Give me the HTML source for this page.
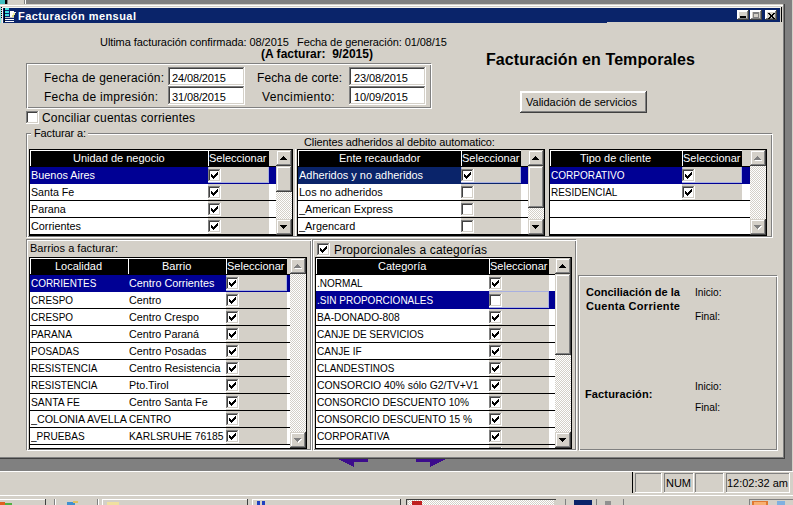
<!DOCTYPE html><html><head><meta charset="utf-8"><style>
html,body{margin:0;padding:0;width:793px;height:505px;overflow:hidden;background:#808080}
div{position:absolute}
.t{white-space:pre;line-height:normal;font-family:"Liberation Sans",sans-serif}
</style></head><body>
<div style="left:0px;top:0px;width:793px;height:505px;background:#808080;"></div>
<div style="left:0px;top:0px;width:5px;height:4px;background:#40c0c0;"></div>
<div style="left:5px;top:0px;width:2px;height:4px;background:#000;"></div>
<div style="left:8px;top:0px;width:16px;height:4px;background:#d4d0c8;"></div>
<div style="left:24px;top:0px;width:1px;height:4px;background:#808080;"></div>
<div style="left:25px;top:0px;width:1px;height:4px;background:#ffffff;"></div>
<div style="left:0px;top:4px;width:784px;height:455px;background:#d4d0c8;"></div>
<div style="left:792px;top:0px;width:1px;height:472px;background:#d4d0c8;"></div>
<div style="left:0px;top:5px;width:783px;height:1px;background:#ffffff;"></div>
<div style="left:0px;top:7px;width:781px;height:1px;background:#f4f2ee;"></div>
<div style="left:783px;top:4px;width:1px;height:455px;background:#808080;"></div>
<div style="left:784px;top:4px;width:1px;height:455px;background:#404040;"></div>
<div style="left:0px;top:457px;width:784px;height:1px;background:#808080;"></div>
<div style="left:0px;top:458px;width:785px;height:1px;background:#404040;"></div>
<div style="left:3px;top:8px;width:777px;height:14px;background:#0a246a;"></div>
<div style="left:3px;top:22px;width:604px;height:1px;background:#0a246a;"></div>
<div style="left:781px;top:7px;width:1px;height:15px;background:#000;"></div>
<div class="t" style="left:18px;top:10px;font-size:11px;color:#ffffff;font-weight:bold;letter-spacing:0.439px;">Facturación mensual</div>
<div style="left:0px;top:7px;width:1px;height:16px;background:#80e0e0;"></div>
<div style="left:1px;top:7px;width:1px;height:1px;background:#000;"></div>
<div style="left:1px;top:9px;width:1px;height:1px;background:#000;"></div>
<div style="left:1px;top:11px;width:1px;height:1px;background:#000;"></div>
<div style="left:1px;top:13px;width:1px;height:1px;background:#000;"></div>
<div style="left:1px;top:15px;width:1px;height:1px;background:#000;"></div>
<div style="left:1px;top:17px;width:1px;height:1px;background:#000;"></div>
<div style="left:2px;top:7px;width:1px;height:16px;background:#f0f0f0;"></div>
<div style="left:4px;top:8px;width:1px;height:14px;background:#000;"></div>
<div style="left:5px;top:8px;width:4px;height:2px;background:#40e0e0;"></div>
<div style="left:5px;top:11px;width:4px;height:2px;background:#40e0e0;"></div>
<div style="left:5px;top:14px;width:4px;height:2px;background:#40e0e0;"></div>
<div style="left:10px;top:11px;width:4px;height:6px;background:#ffffff;"></div>
<div style="left:13px;top:13px;width:2px;height:2px;background:#f0f0a0;"></div>
<div style="left:12px;top:15px;width:2px;height:2px;background:#e0e080;"></div>
<div style="left:14px;top:12px;width:2px;height:1px;background:#f0f0f0;"></div>
<div style="left:5px;top:17px;width:9px;height:1px;background:#c0c0c0;"></div>
<div style="left:5px;top:19px;width:9px;height:1px;background:#ffffff;"></div>
<div style="left:5px;top:21px;width:9px;height:1px;background:#ffffff;"></div>
<div style="left:737px;top:10px;width:12px;height:10px;background:#d4d0c8;"></div>
<div style="left:737px;top:10px;width:11px;height:1px;background:#ffffff;"></div>
<div style="left:737px;top:10px;width:1px;height:9px;background:#ffffff;"></div>
<div style="left:738px;top:11px;width:9px;height:1px;background:#ffffff;"></div>
<div style="left:738px;top:11px;width:1px;height:7px;background:#ffffff;"></div>
<div style="left:737px;top:19px;width:12px;height:1px;background:#404040;"></div>
<div style="left:748px;top:10px;width:1px;height:10px;background:#404040;"></div>
<div style="left:738px;top:18px;width:10px;height:1px;background:#808080;"></div>
<div style="left:747px;top:11px;width:1px;height:8px;background:#808080;"></div>
<div style="left:750px;top:10px;width:12px;height:10px;background:#d4d0c8;"></div>
<div style="left:750px;top:10px;width:11px;height:1px;background:#ffffff;"></div>
<div style="left:750px;top:10px;width:1px;height:9px;background:#ffffff;"></div>
<div style="left:751px;top:11px;width:9px;height:1px;background:#ffffff;"></div>
<div style="left:751px;top:11px;width:1px;height:7px;background:#ffffff;"></div>
<div style="left:750px;top:19px;width:12px;height:1px;background:#404040;"></div>
<div style="left:761px;top:10px;width:1px;height:10px;background:#404040;"></div>
<div style="left:751px;top:18px;width:10px;height:1px;background:#808080;"></div>
<div style="left:760px;top:11px;width:1px;height:8px;background:#808080;"></div>
<div style="left:765px;top:10px;width:12px;height:10px;background:#d4d0c8;"></div>
<div style="left:765px;top:10px;width:11px;height:1px;background:#ffffff;"></div>
<div style="left:765px;top:10px;width:1px;height:9px;background:#ffffff;"></div>
<div style="left:766px;top:11px;width:9px;height:1px;background:#ffffff;"></div>
<div style="left:766px;top:11px;width:1px;height:7px;background:#ffffff;"></div>
<div style="left:765px;top:19px;width:12px;height:1px;background:#404040;"></div>
<div style="left:776px;top:10px;width:1px;height:10px;background:#404040;"></div>
<div style="left:766px;top:18px;width:10px;height:1px;background:#808080;"></div>
<div style="left:775px;top:11px;width:1px;height:8px;background:#808080;"></div>
<div style="left:740px;top:16px;width:6px;height:2px;background:#000;"></div>
<div style="left:753px;top:12px;width:6px;height:6px;border:1px solid #808080;border-top-width:2px;box-sizing:border-box;"></div>
<svg style="position:absolute;left:768px;top:13px" width="7" height="6" shape-rendering="crispEdges" fill="#000"><rect x="0" y="0" width="2" height="1"/><rect x="5" y="0" width="2" height="1"/><rect x="1" y="1" width="2" height="1"/><rect x="4" y="1" width="2" height="1"/><rect x="2" y="2" width="3" height="1"/><rect x="2" y="3" width="3" height="1"/><rect x="1" y="4" width="2" height="1"/><rect x="4" y="4" width="2" height="1"/><rect x="0" y="5" width="2" height="1"/><rect x="5" y="5" width="2" height="1"/></svg>
<div class="t" style="left:100px;top:36px;font-size:11px;color:#000;letter-spacing:-0.068px;">Ultima facturación confirmada: 08/2015</div>
<div class="t" style="left:297px;top:36px;font-size:11px;color:#000;letter-spacing:-0.087px;">Fecha de generación: 01/08/15</div>
<div class="t" style="left:261px;top:47px;font-size:12px;color:#000;font-weight:bold;letter-spacing:0.020px;">(A facturar:  9/2015)</div>
<div class="t" style="left:486px;top:51px;font-size:16px;color:#000;font-weight:bold;letter-spacing:0.081px;">Facturación en Temporales</div>
<div style="left:26px;top:63px;width:405px;height:45px;border:1px solid #808080;box-sizing:border-box;"></div>
<div style="left:27px;top:64px;width:405px;height:45px;border:1px solid #ffffff;box-sizing:border-box;"></div>
<div style="left:26px;top:63px;width:405px;height:1px;background:#808080;"></div>
<div style="left:26px;top:63px;width:1px;height:45px;background:#808080;"></div>
<div class="t" style="left:44px;top:71px;font-size:12px;color:#000;letter-spacing:0.208px;">Fecha de generación:</div>
<div class="t" style="left:44px;top:90px;font-size:12px;color:#000;letter-spacing:0.294px;">Fecha de impresión:</div>
<div class="t" style="left:257px;top:71px;font-size:12px;color:#000;letter-spacing:0.118px;">Fecha de corte:</div>
<div class="t" style="left:262px;top:90px;font-size:12px;color:#000;letter-spacing:0.354px;">Vencimiento:</div>
<div style="left:168px;top:67px;width:77px;height:19px;background:#ffffff;"></div>
<div style="left:168px;top:67px;width:76px;height:1px;background:#808080;"></div>
<div style="left:168px;top:67px;width:1px;height:18px;background:#808080;"></div>
<div style="left:169px;top:68px;width:74px;height:1px;background:#404040;"></div>
<div style="left:169px;top:68px;width:1px;height:16px;background:#404040;"></div>
<div style="left:168px;top:85px;width:77px;height:1px;background:#ffffff;"></div>
<div style="left:244px;top:67px;width:1px;height:19px;background:#ffffff;"></div>
<div style="left:169px;top:84px;width:75px;height:1px;background:#d4d0c8;"></div>
<div style="left:243px;top:68px;width:1px;height:17px;background:#d4d0c8;"></div>
<div style="left:168px;top:86px;width:77px;height:19px;background:#ffffff;"></div>
<div style="left:168px;top:86px;width:76px;height:1px;background:#808080;"></div>
<div style="left:168px;top:86px;width:1px;height:18px;background:#808080;"></div>
<div style="left:169px;top:87px;width:74px;height:1px;background:#404040;"></div>
<div style="left:169px;top:87px;width:1px;height:16px;background:#404040;"></div>
<div style="left:168px;top:104px;width:77px;height:1px;background:#ffffff;"></div>
<div style="left:244px;top:86px;width:1px;height:19px;background:#ffffff;"></div>
<div style="left:169px;top:103px;width:75px;height:1px;background:#d4d0c8;"></div>
<div style="left:243px;top:87px;width:1px;height:17px;background:#d4d0c8;"></div>
<div style="left:349px;top:67px;width:77px;height:19px;background:#ffffff;"></div>
<div style="left:349px;top:67px;width:76px;height:1px;background:#808080;"></div>
<div style="left:349px;top:67px;width:1px;height:18px;background:#808080;"></div>
<div style="left:350px;top:68px;width:74px;height:1px;background:#404040;"></div>
<div style="left:350px;top:68px;width:1px;height:16px;background:#404040;"></div>
<div style="left:349px;top:85px;width:77px;height:1px;background:#ffffff;"></div>
<div style="left:425px;top:67px;width:1px;height:19px;background:#ffffff;"></div>
<div style="left:350px;top:84px;width:75px;height:1px;background:#d4d0c8;"></div>
<div style="left:424px;top:68px;width:1px;height:17px;background:#d4d0c8;"></div>
<div style="left:349px;top:86px;width:77px;height:19px;background:#ffffff;"></div>
<div style="left:349px;top:86px;width:76px;height:1px;background:#808080;"></div>
<div style="left:349px;top:86px;width:1px;height:18px;background:#808080;"></div>
<div style="left:350px;top:87px;width:74px;height:1px;background:#404040;"></div>
<div style="left:350px;top:87px;width:1px;height:16px;background:#404040;"></div>
<div style="left:349px;top:104px;width:77px;height:1px;background:#ffffff;"></div>
<div style="left:425px;top:86px;width:1px;height:19px;background:#ffffff;"></div>
<div style="left:350px;top:103px;width:75px;height:1px;background:#d4d0c8;"></div>
<div style="left:424px;top:87px;width:1px;height:17px;background:#d4d0c8;"></div>
<div class="t" style="left:172px;top:72px;font-size:11px;color:#000;letter-spacing:-0.125px;">24/08/2015</div>
<div class="t" style="left:172px;top:91px;font-size:11px;color:#000;letter-spacing:-0.125px;">31/08/2015</div>
<div class="t" style="left:354px;top:72px;font-size:11px;color:#000;letter-spacing:-0.125px;">23/08/2015</div>
<div class="t" style="left:354px;top:91px;font-size:11px;color:#000;letter-spacing:-0.125px;">10/09/2015</div>
<div style="left:520px;top:91px;width:127px;height:22px;background:#d4d0c8;"></div>
<div style="left:520px;top:91px;width:126px;height:1px;background:#ffffff;"></div>
<div style="left:520px;top:91px;width:1px;height:21px;background:#ffffff;"></div>
<div style="left:521px;top:92px;width:124px;height:1px;background:#ffffff;"></div>
<div style="left:521px;top:92px;width:1px;height:19px;background:#ffffff;"></div>
<div style="left:520px;top:112px;width:127px;height:1px;background:#404040;"></div>
<div style="left:646px;top:91px;width:1px;height:22px;background:#404040;"></div>
<div style="left:521px;top:111px;width:125px;height:1px;background:#808080;"></div>
<div style="left:645px;top:92px;width:1px;height:20px;background:#808080;"></div>
<div class="t" style="left:526px;top:96px;font-size:11px;color:#000;letter-spacing:-0.006px;">Validación de servicios</div>
<div style="left:26px;top:111px;width:13px;height:13px;background:#ffffff;"></div>
<div style="left:26px;top:111px;width:12px;height:1px;background:#808080;"></div>
<div style="left:26px;top:111px;width:1px;height:12px;background:#808080;"></div>
<div style="left:27px;top:112px;width:10px;height:1px;background:#404040;"></div>
<div style="left:27px;top:112px;width:1px;height:10px;background:#404040;"></div>
<div style="left:26px;top:123px;width:13px;height:1px;background:#ffffff;"></div>
<div style="left:38px;top:111px;width:1px;height:13px;background:#ffffff;"></div>
<div style="left:27px;top:122px;width:11px;height:1px;background:#d4d0c8;"></div>
<div style="left:37px;top:112px;width:1px;height:11px;background:#d4d0c8;"></div>
<div class="t" style="left:42px;top:111px;font-size:12px;color:#000;letter-spacing:0.183px;">Conciliar cuentas corrientes</div>
<div style="left:26px;top:133px;width:746px;height:104px;border:1px solid #808080;box-sizing:border-box;"></div>
<div style="left:27px;top:134px;width:746px;height:104px;border:1px solid #ffffff;box-sizing:border-box;"></div>
<div style="left:26px;top:133px;width:746px;height:1px;background:#808080;"></div>
<div style="left:26px;top:133px;width:1px;height:104px;background:#808080;"></div>
<div style="left:31px;top:128px;width:57px;height:10px;background:#d4d0c8;"></div>
<div class="t" style="left:34px;top:127px;font-size:11px;color:#000;letter-spacing:-0.122px;">Facturar a:</div>
<div class="t" style="left:304px;top:136px;font-size:11px;color:#000;letter-spacing:-0.123px;">Clientes adheridos al debito automatico:</div>
<div style="left:29px;top:149px;width:264px;height:87px;background:#000;"></div>
<div style="left:30px;top:166px;width:246px;height:69px;background:#ffffff;"></div>
<div style="left:30px;top:150px;width:246px;height:16px;background:#d4d0c8;"></div>
<div style="left:30px;top:150px;width:178px;height:16px;background:#000;"></div>
<div style="left:30px;top:150px;width:178px;height:1px;background:#ffffff;"></div>
<div style="left:30px;top:150px;width:1px;height:16px;background:#ffffff;"></div>
<div class="t" style="left:73px;top:152px;font-size:11px;color:#ffffff;">Unidad de negocio</div>
<div style="left:208px;top:150px;width:61px;height:16px;background:#000;"></div>
<div style="left:208px;top:150px;width:61px;height:1px;background:#ffffff;"></div>
<div style="left:208px;top:150px;width:1px;height:16px;background:#ffffff;"></div>
<div class="t" style="left:209px;top:152px;font-size:11px;color:#ffffff;">Seleccionar</div>
<div style="left:30px;top:166px;width:246px;height:1px;background:#000;"></div>
<div style="left:30px;top:167px;width:246px;height:17px;background:#000094;"></div>
<div style="left:269px;top:167px;width:7px;height:17px;background:#000094;"></div>
<div style="left:31px;top:169px;width:177px;height:15px;overflow:hidden"><div class="t" style="left:0;top:0;font-size:11px;color:#ffffff;transform:scaleX(0.9879);transform-origin:0 0;">Buenos Aires</div></div>
<div style="left:208px;top:167px;width:61px;height:17px;background:#d4d0c8;"></div>
<div style="left:208px;top:167px;width:61px;height:16px;border:1px solid #a8b0e0;border-top:none;box-sizing:border-box;"></div>
<div style="left:208px;top:183px;width:61px;height:1px;background:#000094;"></div>
<div style="left:208px;top:167px;width:20px;height:16px;overflow:hidden">
<div style="left:0px;top:2px;width:13px;height:13px;background:#ffffff;"></div>
<div style="left:0px;top:2px;width:12px;height:1px;background:#808080;"></div>
<div style="left:0px;top:2px;width:1px;height:12px;background:#808080;"></div>
<div style="left:1px;top:3px;width:10px;height:1px;background:#404040;"></div>
<div style="left:1px;top:3px;width:1px;height:10px;background:#404040;"></div>
<div style="left:0px;top:14px;width:13px;height:1px;background:#ffffff;"></div>
<div style="left:12px;top:2px;width:1px;height:13px;background:#ffffff;"></div>
<div style="left:1px;top:13px;width:11px;height:1px;background:#d4d0c8;"></div>
<div style="left:11px;top:3px;width:1px;height:11px;background:#d4d0c8;"></div>
<svg style="position:absolute;left:3px;top:5px" width="7" height="7" shape-rendering="crispEdges" fill="#000"><rect x="6" y="0" width="1" height="1"/><rect x="5" y="1" width="2" height="1"/><rect x="0" y="2" width="1" height="1"/><rect x="4" y="2" width="3" height="1"/><rect x="0" y="3" width="2" height="1"/><rect x="3" y="3" width="3" height="1"/><rect x="0" y="4" width="5" height="1"/><rect x="1" y="5" width="3" height="1"/><rect x="2" y="6" width="1" height="1"/></svg>
</div>
<div style="left:31px;top:186px;width:177px;height:15px;overflow:hidden"><div class="t" style="left:0;top:0;font-size:11px;color:#000;transform:scaleX(0.9701);transform-origin:0 0;">Santa Fe</div></div>
<div style="left:208px;top:184px;width:61px;height:16px;background:#d4d0c8;"></div>
<div style="left:208px;top:184px;width:20px;height:16px;overflow:hidden">
<div style="left:0px;top:2px;width:13px;height:13px;background:#ffffff;"></div>
<div style="left:0px;top:2px;width:12px;height:1px;background:#808080;"></div>
<div style="left:0px;top:2px;width:1px;height:12px;background:#808080;"></div>
<div style="left:1px;top:3px;width:10px;height:1px;background:#404040;"></div>
<div style="left:1px;top:3px;width:1px;height:10px;background:#404040;"></div>
<div style="left:0px;top:14px;width:13px;height:1px;background:#ffffff;"></div>
<div style="left:12px;top:2px;width:1px;height:13px;background:#ffffff;"></div>
<div style="left:1px;top:13px;width:11px;height:1px;background:#d4d0c8;"></div>
<div style="left:11px;top:3px;width:1px;height:11px;background:#d4d0c8;"></div>
<svg style="position:absolute;left:3px;top:5px" width="7" height="7" shape-rendering="crispEdges" fill="#000"><rect x="6" y="0" width="1" height="1"/><rect x="5" y="1" width="2" height="1"/><rect x="0" y="2" width="1" height="1"/><rect x="4" y="2" width="3" height="1"/><rect x="0" y="3" width="2" height="1"/><rect x="3" y="3" width="3" height="1"/><rect x="0" y="4" width="5" height="1"/><rect x="1" y="5" width="3" height="1"/><rect x="2" y="6" width="1" height="1"/></svg>
</div>
<div style="left:30px;top:200px;width:246px;height:1px;background:#000;"></div>
<div style="left:31px;top:203px;width:177px;height:15px;overflow:hidden"><div class="t" style="left:0;top:0;font-size:11px;color:#000;transform:scaleX(0.9803);transform-origin:0 0;">Parana</div></div>
<div style="left:208px;top:201px;width:61px;height:16px;background:#d4d0c8;"></div>
<div style="left:208px;top:201px;width:20px;height:16px;overflow:hidden">
<div style="left:0px;top:2px;width:13px;height:13px;background:#ffffff;"></div>
<div style="left:0px;top:2px;width:12px;height:1px;background:#808080;"></div>
<div style="left:0px;top:2px;width:1px;height:12px;background:#808080;"></div>
<div style="left:1px;top:3px;width:10px;height:1px;background:#404040;"></div>
<div style="left:1px;top:3px;width:1px;height:10px;background:#404040;"></div>
<div style="left:0px;top:14px;width:13px;height:1px;background:#ffffff;"></div>
<div style="left:12px;top:2px;width:1px;height:13px;background:#ffffff;"></div>
<div style="left:1px;top:13px;width:11px;height:1px;background:#d4d0c8;"></div>
<div style="left:11px;top:3px;width:1px;height:11px;background:#d4d0c8;"></div>
<svg style="position:absolute;left:3px;top:5px" width="7" height="7" shape-rendering="crispEdges" fill="#000"><rect x="6" y="0" width="1" height="1"/><rect x="5" y="1" width="2" height="1"/><rect x="0" y="2" width="1" height="1"/><rect x="4" y="2" width="3" height="1"/><rect x="0" y="3" width="2" height="1"/><rect x="3" y="3" width="3" height="1"/><rect x="0" y="4" width="5" height="1"/><rect x="1" y="5" width="3" height="1"/><rect x="2" y="6" width="1" height="1"/></svg>
</div>
<div style="left:30px;top:217px;width:246px;height:1px;background:#000;"></div>
<div style="left:31px;top:220px;width:177px;height:15px;overflow:hidden"><div class="t" style="left:0;top:0;font-size:11px;color:#000;transform:scaleX(0.9851);transform-origin:0 0;">Corrientes</div></div>
<div style="left:208px;top:218px;width:61px;height:16px;background:#d4d0c8;"></div>
<div style="left:208px;top:218px;width:20px;height:16px;overflow:hidden">
<div style="left:0px;top:2px;width:13px;height:13px;background:#ffffff;"></div>
<div style="left:0px;top:2px;width:12px;height:1px;background:#808080;"></div>
<div style="left:0px;top:2px;width:1px;height:12px;background:#808080;"></div>
<div style="left:1px;top:3px;width:10px;height:1px;background:#404040;"></div>
<div style="left:1px;top:3px;width:1px;height:10px;background:#404040;"></div>
<div style="left:0px;top:14px;width:13px;height:1px;background:#ffffff;"></div>
<div style="left:12px;top:2px;width:1px;height:13px;background:#ffffff;"></div>
<div style="left:1px;top:13px;width:11px;height:1px;background:#d4d0c8;"></div>
<div style="left:11px;top:3px;width:1px;height:11px;background:#d4d0c8;"></div>
<svg style="position:absolute;left:3px;top:5px" width="7" height="7" shape-rendering="crispEdges" fill="#000"><rect x="6" y="0" width="1" height="1"/><rect x="5" y="1" width="2" height="1"/><rect x="0" y="2" width="1" height="1"/><rect x="4" y="2" width="3" height="1"/><rect x="0" y="3" width="2" height="1"/><rect x="3" y="3" width="3" height="1"/><rect x="0" y="4" width="5" height="1"/><rect x="1" y="5" width="3" height="1"/><rect x="2" y="6" width="1" height="1"/></svg>
</div>
<div style="left:30px;top:234px;width:246px;height:1px;background:#000;"></div>
<div style="left:276px;top:150px;width:16px;height:16px;background:#d4d0c8;"></div>
<div style="left:276px;top:150px;width:15px;height:1px;background:#d4d0c8;"></div>
<div style="left:276px;top:150px;width:1px;height:15px;background:#d4d0c8;"></div>
<div style="left:277px;top:151px;width:13px;height:1px;background:#ffffff;"></div>
<div style="left:277px;top:151px;width:1px;height:13px;background:#ffffff;"></div>
<div style="left:276px;top:165px;width:16px;height:1px;background:#404040;"></div>
<div style="left:291px;top:150px;width:1px;height:16px;background:#404040;"></div>
<div style="left:277px;top:164px;width:14px;height:1px;background:#808080;"></div>
<div style="left:290px;top:151px;width:1px;height:14px;background:#808080;"></div>
<svg style="position:absolute;left:280px;top:156px" width="7" height="4" shape-rendering="crispEdges" fill="#000"><rect x="3" y="0" width="1" height="1"/><rect x="2" y="1" width="3" height="1"/><rect x="1" y="2" width="5" height="1"/><rect x="0" y="3" width="7" height="1"/></svg>
<div style="left:276px;top:219px;width:16px;height:16px;background:#d4d0c8;"></div>
<div style="left:276px;top:219px;width:15px;height:1px;background:#d4d0c8;"></div>
<div style="left:276px;top:219px;width:1px;height:15px;background:#d4d0c8;"></div>
<div style="left:277px;top:220px;width:13px;height:1px;background:#ffffff;"></div>
<div style="left:277px;top:220px;width:1px;height:13px;background:#ffffff;"></div>
<div style="left:276px;top:234px;width:16px;height:1px;background:#404040;"></div>
<div style="left:291px;top:219px;width:1px;height:16px;background:#404040;"></div>
<div style="left:277px;top:233px;width:14px;height:1px;background:#808080;"></div>
<div style="left:290px;top:220px;width:1px;height:14px;background:#808080;"></div>
<svg style="position:absolute;left:280px;top:225px" width="7" height="4" shape-rendering="crispEdges" fill="#000"><rect x="0" y="0" width="7" height="1"/><rect x="1" y="1" width="5" height="1"/><rect x="2" y="2" width="3" height="1"/><rect x="3" y="3" width="1" height="1"/></svg>
<div style="left:276px;top:166px;width:16px;height:53px;background-color:#d4d0c8;background-image:conic-gradient(#fff 25%,transparent 0 50%,#fff 0 75%,transparent 0);background-size:2px 2px;"></div>
<div style="left:276px;top:166px;width:16px;height:26px;background:#d4d0c8;"></div>
<div style="left:276px;top:166px;width:15px;height:1px;background:#d4d0c8;"></div>
<div style="left:276px;top:166px;width:1px;height:25px;background:#d4d0c8;"></div>
<div style="left:277px;top:167px;width:13px;height:1px;background:#ffffff;"></div>
<div style="left:277px;top:167px;width:1px;height:23px;background:#ffffff;"></div>
<div style="left:276px;top:191px;width:16px;height:1px;background:#404040;"></div>
<div style="left:291px;top:166px;width:1px;height:26px;background:#404040;"></div>
<div style="left:277px;top:190px;width:14px;height:1px;background:#808080;"></div>
<div style="left:290px;top:167px;width:1px;height:24px;background:#808080;"></div>
<div style="left:295px;top:149px;width:1px;height:87px;background:#ffffff;"></div>
<div style="left:297px;top:149px;width:248px;height:87px;background:#000;"></div>
<div style="left:298px;top:166px;width:230px;height:69px;background:#ffffff;"></div>
<div style="left:298px;top:150px;width:230px;height:16px;background:#d4d0c8;"></div>
<div style="left:298px;top:150px;width:163px;height:16px;background:#000;"></div>
<div style="left:298px;top:150px;width:163px;height:1px;background:#ffffff;"></div>
<div style="left:298px;top:150px;width:1px;height:16px;background:#ffffff;"></div>
<div class="t" style="left:339px;top:152px;font-size:11px;color:#ffffff;">Ente recaudador</div>
<div style="left:461px;top:150px;width:60px;height:16px;background:#000;"></div>
<div style="left:461px;top:150px;width:60px;height:1px;background:#ffffff;"></div>
<div style="left:461px;top:150px;width:1px;height:16px;background:#ffffff;"></div>
<div class="t" style="left:462px;top:152px;font-size:11px;color:#ffffff;">Seleccionar</div>
<div style="left:298px;top:166px;width:230px;height:1px;background:#000;"></div>
<div style="left:298px;top:167px;width:230px;height:17px;background:#0a246a;"></div>
<div style="left:521px;top:167px;width:7px;height:17px;background:#000094;"></div>
<div style="left:299px;top:169px;width:162px;height:15px;overflow:hidden"><div class="t" style="left:0;top:0;font-size:11px;color:#ffffff;transform:scaleX(0.9944);transform-origin:0 0;">Adheridos y no adheridos</div></div>
<div style="left:461px;top:167px;width:60px;height:17px;background:#d4d0c8;"></div>
<div style="left:461px;top:167px;width:60px;height:16px;border:1px solid #a8b0e0;border-top:none;box-sizing:border-box;"></div>
<div style="left:461px;top:183px;width:60px;height:1px;background:#0a246a;"></div>
<div style="left:461px;top:167px;width:20px;height:16px;overflow:hidden">
<div style="left:0px;top:2px;width:13px;height:13px;background:#ffffff;"></div>
<div style="left:0px;top:2px;width:12px;height:1px;background:#808080;"></div>
<div style="left:0px;top:2px;width:1px;height:12px;background:#808080;"></div>
<div style="left:1px;top:3px;width:10px;height:1px;background:#404040;"></div>
<div style="left:1px;top:3px;width:1px;height:10px;background:#404040;"></div>
<div style="left:0px;top:14px;width:13px;height:1px;background:#ffffff;"></div>
<div style="left:12px;top:2px;width:1px;height:13px;background:#ffffff;"></div>
<div style="left:1px;top:13px;width:11px;height:1px;background:#d4d0c8;"></div>
<div style="left:11px;top:3px;width:1px;height:11px;background:#d4d0c8;"></div>
<svg style="position:absolute;left:3px;top:5px" width="7" height="7" shape-rendering="crispEdges" fill="#000"><rect x="6" y="0" width="1" height="1"/><rect x="5" y="1" width="2" height="1"/><rect x="0" y="2" width="1" height="1"/><rect x="4" y="2" width="3" height="1"/><rect x="0" y="3" width="2" height="1"/><rect x="3" y="3" width="3" height="1"/><rect x="0" y="4" width="5" height="1"/><rect x="1" y="5" width="3" height="1"/><rect x="2" y="6" width="1" height="1"/></svg>
</div>
<div style="left:299px;top:186px;width:162px;height:15px;overflow:hidden"><div class="t" style="left:0;top:0;font-size:11px;color:#000;transform:scaleX(0.9931);transform-origin:0 0;">Los no adheridos</div></div>
<div style="left:461px;top:184px;width:60px;height:16px;background:#d4d0c8;"></div>
<div style="left:461px;top:184px;width:20px;height:16px;overflow:hidden">
<div style="left:0px;top:2px;width:13px;height:13px;background:#ffffff;"></div>
<div style="left:0px;top:2px;width:12px;height:1px;background:#808080;"></div>
<div style="left:0px;top:2px;width:1px;height:12px;background:#808080;"></div>
<div style="left:1px;top:3px;width:10px;height:1px;background:#404040;"></div>
<div style="left:1px;top:3px;width:1px;height:10px;background:#404040;"></div>
<div style="left:0px;top:14px;width:13px;height:1px;background:#ffffff;"></div>
<div style="left:12px;top:2px;width:1px;height:13px;background:#ffffff;"></div>
<div style="left:1px;top:13px;width:11px;height:1px;background:#d4d0c8;"></div>
<div style="left:11px;top:3px;width:1px;height:11px;background:#d4d0c8;"></div>
</div>
<div style="left:298px;top:200px;width:230px;height:1px;background:#000;"></div>
<div style="left:299px;top:203px;width:162px;height:15px;overflow:hidden"><div class="t" style="left:0;top:0;font-size:11px;color:#000;transform:scaleX(0.9854);transform-origin:0 0;">_American Express</div></div>
<div style="left:461px;top:201px;width:60px;height:16px;background:#d4d0c8;"></div>
<div style="left:461px;top:201px;width:20px;height:16px;overflow:hidden">
<div style="left:0px;top:2px;width:13px;height:13px;background:#ffffff;"></div>
<div style="left:0px;top:2px;width:12px;height:1px;background:#808080;"></div>
<div style="left:0px;top:2px;width:1px;height:12px;background:#808080;"></div>
<div style="left:1px;top:3px;width:10px;height:1px;background:#404040;"></div>
<div style="left:1px;top:3px;width:1px;height:10px;background:#404040;"></div>
<div style="left:0px;top:14px;width:13px;height:1px;background:#ffffff;"></div>
<div style="left:12px;top:2px;width:1px;height:13px;background:#ffffff;"></div>
<div style="left:1px;top:13px;width:11px;height:1px;background:#d4d0c8;"></div>
<div style="left:11px;top:3px;width:1px;height:11px;background:#d4d0c8;"></div>
</div>
<div style="left:298px;top:217px;width:230px;height:1px;background:#000;"></div>
<div style="left:299px;top:220px;width:162px;height:15px;overflow:hidden"><div class="t" style="left:0;top:0;font-size:11px;color:#000;transform:scaleX(0.9877);transform-origin:0 0;">_Argencard</div></div>
<div style="left:461px;top:218px;width:60px;height:16px;background:#d4d0c8;"></div>
<div style="left:461px;top:218px;width:20px;height:16px;overflow:hidden">
<div style="left:0px;top:2px;width:13px;height:13px;background:#ffffff;"></div>
<div style="left:0px;top:2px;width:12px;height:1px;background:#808080;"></div>
<div style="left:0px;top:2px;width:1px;height:12px;background:#808080;"></div>
<div style="left:1px;top:3px;width:10px;height:1px;background:#404040;"></div>
<div style="left:1px;top:3px;width:1px;height:10px;background:#404040;"></div>
<div style="left:0px;top:14px;width:13px;height:1px;background:#ffffff;"></div>
<div style="left:12px;top:2px;width:1px;height:13px;background:#ffffff;"></div>
<div style="left:1px;top:13px;width:11px;height:1px;background:#d4d0c8;"></div>
<div style="left:11px;top:3px;width:1px;height:11px;background:#d4d0c8;"></div>
</div>
<div style="left:298px;top:234px;width:230px;height:1px;background:#000;"></div>
<div style="left:528px;top:150px;width:16px;height:16px;background:#d4d0c8;"></div>
<div style="left:528px;top:150px;width:15px;height:1px;background:#d4d0c8;"></div>
<div style="left:528px;top:150px;width:1px;height:15px;background:#d4d0c8;"></div>
<div style="left:529px;top:151px;width:13px;height:1px;background:#ffffff;"></div>
<div style="left:529px;top:151px;width:1px;height:13px;background:#ffffff;"></div>
<div style="left:528px;top:165px;width:16px;height:1px;background:#404040;"></div>
<div style="left:543px;top:150px;width:1px;height:16px;background:#404040;"></div>
<div style="left:529px;top:164px;width:14px;height:1px;background:#808080;"></div>
<div style="left:542px;top:151px;width:1px;height:14px;background:#808080;"></div>
<svg style="position:absolute;left:532px;top:156px" width="7" height="4" shape-rendering="crispEdges" fill="#000"><rect x="3" y="0" width="1" height="1"/><rect x="2" y="1" width="3" height="1"/><rect x="1" y="2" width="5" height="1"/><rect x="0" y="3" width="7" height="1"/></svg>
<div style="left:528px;top:219px;width:16px;height:16px;background:#d4d0c8;"></div>
<div style="left:528px;top:219px;width:15px;height:1px;background:#d4d0c8;"></div>
<div style="left:528px;top:219px;width:1px;height:15px;background:#d4d0c8;"></div>
<div style="left:529px;top:220px;width:13px;height:1px;background:#ffffff;"></div>
<div style="left:529px;top:220px;width:1px;height:13px;background:#ffffff;"></div>
<div style="left:528px;top:234px;width:16px;height:1px;background:#404040;"></div>
<div style="left:543px;top:219px;width:1px;height:16px;background:#404040;"></div>
<div style="left:529px;top:233px;width:14px;height:1px;background:#808080;"></div>
<div style="left:542px;top:220px;width:1px;height:14px;background:#808080;"></div>
<svg style="position:absolute;left:532px;top:225px" width="7" height="4" shape-rendering="crispEdges" fill="#000"><rect x="0" y="0" width="7" height="1"/><rect x="1" y="1" width="5" height="1"/><rect x="2" y="2" width="3" height="1"/><rect x="3" y="3" width="1" height="1"/></svg>
<div style="left:528px;top:166px;width:16px;height:53px;background-color:#d4d0c8;background-image:conic-gradient(#fff 25%,transparent 0 50%,#fff 0 75%,transparent 0);background-size:2px 2px;"></div>
<div style="left:528px;top:166px;width:16px;height:42px;background:#d4d0c8;"></div>
<div style="left:528px;top:166px;width:15px;height:1px;background:#d4d0c8;"></div>
<div style="left:528px;top:166px;width:1px;height:41px;background:#d4d0c8;"></div>
<div style="left:529px;top:167px;width:13px;height:1px;background:#ffffff;"></div>
<div style="left:529px;top:167px;width:1px;height:39px;background:#ffffff;"></div>
<div style="left:528px;top:207px;width:16px;height:1px;background:#404040;"></div>
<div style="left:543px;top:166px;width:1px;height:42px;background:#404040;"></div>
<div style="left:529px;top:206px;width:14px;height:1px;background:#808080;"></div>
<div style="left:542px;top:167px;width:1px;height:40px;background:#808080;"></div>
<div style="left:549px;top:149px;width:218px;height:87px;background:#000;"></div>
<div style="left:550px;top:166px;width:200px;height:69px;background:#ffffff;"></div>
<div style="left:550px;top:150px;width:200px;height:16px;background:#d4d0c8;"></div>
<div style="left:550px;top:150px;width:132px;height:16px;background:#000;"></div>
<div style="left:550px;top:150px;width:132px;height:1px;background:#ffffff;"></div>
<div style="left:550px;top:150px;width:1px;height:16px;background:#ffffff;"></div>
<div class="t" style="left:580px;top:152px;font-size:11px;color:#ffffff;">Tipo de cliente</div>
<div style="left:682px;top:150px;width:60px;height:16px;background:#000;"></div>
<div style="left:682px;top:150px;width:60px;height:1px;background:#ffffff;"></div>
<div style="left:682px;top:150px;width:1px;height:16px;background:#ffffff;"></div>
<div class="t" style="left:683px;top:152px;font-size:11px;color:#ffffff;">Seleccionar</div>
<div style="left:550px;top:166px;width:200px;height:1px;background:#000;"></div>
<div style="left:550px;top:167px;width:200px;height:17px;background:#000094;"></div>
<div style="left:742px;top:167px;width:8px;height:17px;background:#000094;"></div>
<div style="left:551px;top:169px;width:131px;height:15px;overflow:hidden"><div class="t" style="left:0;top:0;font-size:11px;color:#ffffff;transform:scaleX(0.9141);transform-origin:0 0;">CORPORATIVO</div></div>
<div style="left:682px;top:167px;width:60px;height:17px;background:#d4d0c8;"></div>
<div style="left:682px;top:167px;width:60px;height:16px;border:1px solid #a8b0e0;border-top:none;box-sizing:border-box;"></div>
<div style="left:682px;top:183px;width:60px;height:1px;background:#000094;"></div>
<div style="left:682px;top:167px;width:20px;height:16px;overflow:hidden">
<div style="left:0px;top:2px;width:13px;height:13px;background:#ffffff;"></div>
<div style="left:0px;top:2px;width:12px;height:1px;background:#808080;"></div>
<div style="left:0px;top:2px;width:1px;height:12px;background:#808080;"></div>
<div style="left:1px;top:3px;width:10px;height:1px;background:#404040;"></div>
<div style="left:1px;top:3px;width:1px;height:10px;background:#404040;"></div>
<div style="left:0px;top:14px;width:13px;height:1px;background:#ffffff;"></div>
<div style="left:12px;top:2px;width:1px;height:13px;background:#ffffff;"></div>
<div style="left:1px;top:13px;width:11px;height:1px;background:#d4d0c8;"></div>
<div style="left:11px;top:3px;width:1px;height:11px;background:#d4d0c8;"></div>
<svg style="position:absolute;left:3px;top:5px" width="7" height="7" shape-rendering="crispEdges" fill="#000"><rect x="6" y="0" width="1" height="1"/><rect x="5" y="1" width="2" height="1"/><rect x="0" y="2" width="1" height="1"/><rect x="4" y="2" width="3" height="1"/><rect x="0" y="3" width="2" height="1"/><rect x="3" y="3" width="3" height="1"/><rect x="0" y="4" width="5" height="1"/><rect x="1" y="5" width="3" height="1"/><rect x="2" y="6" width="1" height="1"/></svg>
</div>
<div style="left:551px;top:186px;width:131px;height:15px;overflow:hidden"><div class="t" style="left:0;top:0;font-size:11px;color:#000;transform:scaleX(0.9050);transform-origin:0 0;">RESIDENCIAL</div></div>
<div style="left:682px;top:184px;width:60px;height:16px;background:#d4d0c8;"></div>
<div style="left:682px;top:184px;width:20px;height:16px;overflow:hidden">
<div style="left:0px;top:2px;width:13px;height:13px;background:#ffffff;"></div>
<div style="left:0px;top:2px;width:12px;height:1px;background:#808080;"></div>
<div style="left:0px;top:2px;width:1px;height:12px;background:#808080;"></div>
<div style="left:1px;top:3px;width:10px;height:1px;background:#404040;"></div>
<div style="left:1px;top:3px;width:1px;height:10px;background:#404040;"></div>
<div style="left:0px;top:14px;width:13px;height:1px;background:#ffffff;"></div>
<div style="left:12px;top:2px;width:1px;height:13px;background:#ffffff;"></div>
<div style="left:1px;top:13px;width:11px;height:1px;background:#d4d0c8;"></div>
<div style="left:11px;top:3px;width:1px;height:11px;background:#d4d0c8;"></div>
<svg style="position:absolute;left:3px;top:5px" width="7" height="7" shape-rendering="crispEdges" fill="#000"><rect x="6" y="0" width="1" height="1"/><rect x="5" y="1" width="2" height="1"/><rect x="0" y="2" width="1" height="1"/><rect x="4" y="2" width="3" height="1"/><rect x="0" y="3" width="2" height="1"/><rect x="3" y="3" width="3" height="1"/><rect x="0" y="4" width="5" height="1"/><rect x="1" y="5" width="3" height="1"/><rect x="2" y="6" width="1" height="1"/></svg>
</div>
<div style="left:550px;top:200px;width:200px;height:1px;background:#000;"></div>
<div style="left:550px;top:217px;width:200px;height:1px;background:#000;"></div>
<div style="left:550px;top:234px;width:200px;height:1px;background:#000;"></div>
<div style="left:750px;top:150px;width:16px;height:16px;background:#d4d0c8;"></div>
<div style="left:750px;top:150px;width:15px;height:1px;background:#d4d0c8;"></div>
<div style="left:750px;top:150px;width:1px;height:15px;background:#d4d0c8;"></div>
<div style="left:751px;top:151px;width:13px;height:1px;background:#ffffff;"></div>
<div style="left:751px;top:151px;width:1px;height:13px;background:#ffffff;"></div>
<div style="left:750px;top:165px;width:16px;height:1px;background:#404040;"></div>
<div style="left:765px;top:150px;width:1px;height:16px;background:#404040;"></div>
<div style="left:751px;top:164px;width:14px;height:1px;background:#808080;"></div>
<div style="left:764px;top:151px;width:1px;height:14px;background:#808080;"></div>
<svg style="position:absolute;left:755px;top:157px" width="7" height="4" shape-rendering="crispEdges" fill="#ffffff"><rect x="3" y="0" width="1" height="1"/><rect x="2" y="1" width="3" height="1"/><rect x="1" y="2" width="5" height="1"/><rect x="0" y="3" width="7" height="1"/></svg>
<svg style="position:absolute;left:754px;top:156px" width="7" height="4" shape-rendering="crispEdges" fill="#808080"><rect x="3" y="0" width="1" height="1"/><rect x="2" y="1" width="3" height="1"/><rect x="1" y="2" width="5" height="1"/><rect x="0" y="3" width="7" height="1"/></svg>
<div style="left:750px;top:219px;width:16px;height:16px;background:#d4d0c8;"></div>
<div style="left:750px;top:219px;width:15px;height:1px;background:#d4d0c8;"></div>
<div style="left:750px;top:219px;width:1px;height:15px;background:#d4d0c8;"></div>
<div style="left:751px;top:220px;width:13px;height:1px;background:#ffffff;"></div>
<div style="left:751px;top:220px;width:1px;height:13px;background:#ffffff;"></div>
<div style="left:750px;top:234px;width:16px;height:1px;background:#404040;"></div>
<div style="left:765px;top:219px;width:1px;height:16px;background:#404040;"></div>
<div style="left:751px;top:233px;width:14px;height:1px;background:#808080;"></div>
<div style="left:764px;top:220px;width:1px;height:14px;background:#808080;"></div>
<svg style="position:absolute;left:755px;top:226px" width="7" height="4" shape-rendering="crispEdges" fill="#ffffff"><rect x="0" y="0" width="7" height="1"/><rect x="1" y="1" width="5" height="1"/><rect x="2" y="2" width="3" height="1"/><rect x="3" y="3" width="1" height="1"/></svg>
<svg style="position:absolute;left:754px;top:225px" width="7" height="4" shape-rendering="crispEdges" fill="#808080"><rect x="0" y="0" width="7" height="1"/><rect x="1" y="1" width="5" height="1"/><rect x="2" y="2" width="3" height="1"/><rect x="3" y="3" width="1" height="1"/></svg>
<div style="left:750px;top:166px;width:16px;height:53px;background-color:#d4d0c8;background-image:conic-gradient(#fff 25%,transparent 0 50%,#fff 0 75%,transparent 0);background-size:2px 2px;"></div>
<div style="left:26px;top:239px;width:285px;height:211px;border:1px solid #808080;box-sizing:border-box;"></div>
<div style="left:27px;top:240px;width:285px;height:211px;border:1px solid #ffffff;box-sizing:border-box;"></div>
<div style="left:26px;top:239px;width:285px;height:1px;background:#808080;"></div>
<div style="left:26px;top:239px;width:1px;height:211px;background:#808080;"></div>
<div class="t" style="left:30px;top:242px;font-size:11px;color:#000;letter-spacing:0.030px;">Barrios a facturar:</div>
<div style="left:29px;top:257px;width:278px;height:192px;background:#000;"></div>
<div style="left:30px;top:274px;width:260px;height:174px;background:#ffffff;"></div>
<div style="left:30px;top:258px;width:260px;height:16px;background:#d4d0c8;"></div>
<div style="left:30px;top:258px;width:98px;height:16px;background:#000;"></div>
<div style="left:30px;top:258px;width:98px;height:1px;background:#ffffff;"></div>
<div style="left:30px;top:258px;width:1px;height:16px;background:#ffffff;"></div>
<div class="t" style="left:55px;top:260px;font-size:11px;color:#ffffff;">Localidad</div>
<div style="left:128px;top:258px;width:98px;height:16px;background:#000;"></div>
<div style="left:128px;top:258px;width:98px;height:1px;background:#ffffff;"></div>
<div style="left:128px;top:258px;width:1px;height:16px;background:#ffffff;"></div>
<div class="t" style="left:162px;top:260px;font-size:11px;color:#ffffff;">Barrio</div>
<div style="left:226px;top:258px;width:61px;height:16px;background:#000;"></div>
<div style="left:226px;top:258px;width:61px;height:1px;background:#ffffff;"></div>
<div style="left:226px;top:258px;width:1px;height:16px;background:#ffffff;"></div>
<div class="t" style="left:227px;top:260px;font-size:11px;color:#ffffff;">Seleccionar</div>
<div style="left:30px;top:274px;width:260px;height:1px;background:#000;"></div>
<div style="left:30px;top:275px;width:260px;height:17px;background:#000094;"></div>
<div style="left:287px;top:275px;width:3px;height:17px;background:#000094;"></div>
<div style="left:31px;top:277px;width:97px;height:15px;overflow:hidden"><div class="t" style="left:0;top:0;font-size:11px;color:#ffffff;transform:scaleX(0.9050);transform-origin:0 0;">CORRIENTES</div></div>
<div style="left:129px;top:277px;width:97px;height:15px;overflow:hidden"><div class="t" style="left:0;top:0;font-size:11px;color:#ffffff;transform:scaleX(0.9826);transform-origin:0 0;">Centro Corrientes</div></div>
<div style="left:226px;top:275px;width:61px;height:17px;background:#d4d0c8;"></div>
<div style="left:226px;top:275px;width:61px;height:16px;border:1px solid #a8b0e0;border-top:none;box-sizing:border-box;"></div>
<div style="left:226px;top:291px;width:61px;height:1px;background:#000094;"></div>
<div style="left:226px;top:275px;width:20px;height:16px;overflow:hidden">
<div style="left:0px;top:2px;width:13px;height:13px;background:#ffffff;"></div>
<div style="left:0px;top:2px;width:12px;height:1px;background:#808080;"></div>
<div style="left:0px;top:2px;width:1px;height:12px;background:#808080;"></div>
<div style="left:1px;top:3px;width:10px;height:1px;background:#404040;"></div>
<div style="left:1px;top:3px;width:1px;height:10px;background:#404040;"></div>
<div style="left:0px;top:14px;width:13px;height:1px;background:#ffffff;"></div>
<div style="left:12px;top:2px;width:1px;height:13px;background:#ffffff;"></div>
<div style="left:1px;top:13px;width:11px;height:1px;background:#d4d0c8;"></div>
<div style="left:11px;top:3px;width:1px;height:11px;background:#d4d0c8;"></div>
<svg style="position:absolute;left:3px;top:5px" width="7" height="7" shape-rendering="crispEdges" fill="#000"><rect x="6" y="0" width="1" height="1"/><rect x="5" y="1" width="2" height="1"/><rect x="0" y="2" width="1" height="1"/><rect x="4" y="2" width="3" height="1"/><rect x="0" y="3" width="2" height="1"/><rect x="3" y="3" width="3" height="1"/><rect x="0" y="4" width="5" height="1"/><rect x="1" y="5" width="3" height="1"/><rect x="2" y="6" width="1" height="1"/></svg>
</div>
<div style="left:31px;top:294px;width:97px;height:15px;overflow:hidden"><div class="t" style="left:0;top:0;font-size:11px;color:#000;transform:scaleX(0.9050);transform-origin:0 0;">CRESPO</div></div>
<div style="left:129px;top:294px;width:97px;height:15px;overflow:hidden"><div class="t" style="left:0;top:0;font-size:11px;color:#000;transform:scaleX(0.9772);transform-origin:0 0;">Centro</div></div>
<div style="left:226px;top:292px;width:61px;height:16px;background:#d4d0c8;"></div>
<div style="left:226px;top:292px;width:20px;height:16px;overflow:hidden">
<div style="left:0px;top:2px;width:13px;height:13px;background:#ffffff;"></div>
<div style="left:0px;top:2px;width:12px;height:1px;background:#808080;"></div>
<div style="left:0px;top:2px;width:1px;height:12px;background:#808080;"></div>
<div style="left:1px;top:3px;width:10px;height:1px;background:#404040;"></div>
<div style="left:1px;top:3px;width:1px;height:10px;background:#404040;"></div>
<div style="left:0px;top:14px;width:13px;height:1px;background:#ffffff;"></div>
<div style="left:12px;top:2px;width:1px;height:13px;background:#ffffff;"></div>
<div style="left:1px;top:13px;width:11px;height:1px;background:#d4d0c8;"></div>
<div style="left:11px;top:3px;width:1px;height:11px;background:#d4d0c8;"></div>
<svg style="position:absolute;left:3px;top:5px" width="7" height="7" shape-rendering="crispEdges" fill="#000"><rect x="6" y="0" width="1" height="1"/><rect x="5" y="1" width="2" height="1"/><rect x="0" y="2" width="1" height="1"/><rect x="4" y="2" width="3" height="1"/><rect x="0" y="3" width="2" height="1"/><rect x="3" y="3" width="3" height="1"/><rect x="0" y="4" width="5" height="1"/><rect x="1" y="5" width="3" height="1"/><rect x="2" y="6" width="1" height="1"/></svg>
</div>
<div style="left:30px;top:308px;width:260px;height:1px;background:#000;"></div>
<div style="left:31px;top:311px;width:97px;height:15px;overflow:hidden"><div class="t" style="left:0;top:0;font-size:11px;color:#000;transform:scaleX(0.9050);transform-origin:0 0;">CRESPO</div></div>
<div style="left:129px;top:311px;width:97px;height:15px;overflow:hidden"><div class="t" style="left:0;top:0;font-size:11px;color:#000;transform:scaleX(0.9789);transform-origin:0 0;">Centro Crespo</div></div>
<div style="left:226px;top:309px;width:61px;height:16px;background:#d4d0c8;"></div>
<div style="left:226px;top:309px;width:20px;height:16px;overflow:hidden">
<div style="left:0px;top:2px;width:13px;height:13px;background:#ffffff;"></div>
<div style="left:0px;top:2px;width:12px;height:1px;background:#808080;"></div>
<div style="left:0px;top:2px;width:1px;height:12px;background:#808080;"></div>
<div style="left:1px;top:3px;width:10px;height:1px;background:#404040;"></div>
<div style="left:1px;top:3px;width:1px;height:10px;background:#404040;"></div>
<div style="left:0px;top:14px;width:13px;height:1px;background:#ffffff;"></div>
<div style="left:12px;top:2px;width:1px;height:13px;background:#ffffff;"></div>
<div style="left:1px;top:13px;width:11px;height:1px;background:#d4d0c8;"></div>
<div style="left:11px;top:3px;width:1px;height:11px;background:#d4d0c8;"></div>
<svg style="position:absolute;left:3px;top:5px" width="7" height="7" shape-rendering="crispEdges" fill="#000"><rect x="6" y="0" width="1" height="1"/><rect x="5" y="1" width="2" height="1"/><rect x="0" y="2" width="1" height="1"/><rect x="4" y="2" width="3" height="1"/><rect x="0" y="3" width="2" height="1"/><rect x="3" y="3" width="3" height="1"/><rect x="0" y="4" width="5" height="1"/><rect x="1" y="5" width="3" height="1"/><rect x="2" y="6" width="1" height="1"/></svg>
</div>
<div style="left:30px;top:325px;width:260px;height:1px;background:#000;"></div>
<div style="left:31px;top:328px;width:97px;height:15px;overflow:hidden"><div class="t" style="left:0;top:0;font-size:11px;color:#000;transform:scaleX(0.9215);transform-origin:0 0;">PARANA</div></div>
<div style="left:129px;top:328px;width:97px;height:15px;overflow:hidden"><div class="t" style="left:0;top:0;font-size:11px;color:#000;transform:scaleX(0.9797);transform-origin:0 0;">Centro Paraná</div></div>
<div style="left:226px;top:326px;width:61px;height:16px;background:#d4d0c8;"></div>
<div style="left:226px;top:326px;width:20px;height:16px;overflow:hidden">
<div style="left:0px;top:2px;width:13px;height:13px;background:#ffffff;"></div>
<div style="left:0px;top:2px;width:12px;height:1px;background:#808080;"></div>
<div style="left:0px;top:2px;width:1px;height:12px;background:#808080;"></div>
<div style="left:1px;top:3px;width:10px;height:1px;background:#404040;"></div>
<div style="left:1px;top:3px;width:1px;height:10px;background:#404040;"></div>
<div style="left:0px;top:14px;width:13px;height:1px;background:#ffffff;"></div>
<div style="left:12px;top:2px;width:1px;height:13px;background:#ffffff;"></div>
<div style="left:1px;top:13px;width:11px;height:1px;background:#d4d0c8;"></div>
<div style="left:11px;top:3px;width:1px;height:11px;background:#d4d0c8;"></div>
<svg style="position:absolute;left:3px;top:5px" width="7" height="7" shape-rendering="crispEdges" fill="#000"><rect x="6" y="0" width="1" height="1"/><rect x="5" y="1" width="2" height="1"/><rect x="0" y="2" width="1" height="1"/><rect x="4" y="2" width="3" height="1"/><rect x="0" y="3" width="2" height="1"/><rect x="3" y="3" width="3" height="1"/><rect x="0" y="4" width="5" height="1"/><rect x="1" y="5" width="3" height="1"/><rect x="2" y="6" width="1" height="1"/></svg>
</div>
<div style="left:30px;top:342px;width:260px;height:1px;background:#000;"></div>
<div style="left:31px;top:345px;width:97px;height:15px;overflow:hidden"><div class="t" style="left:0;top:0;font-size:11px;color:#000;transform:scaleX(0.9050);transform-origin:0 0;">POSADAS</div></div>
<div style="left:129px;top:345px;width:97px;height:15px;overflow:hidden"><div class="t" style="left:0;top:0;font-size:11px;color:#000;transform:scaleX(0.9816);transform-origin:0 0;">Centro Posadas</div></div>
<div style="left:226px;top:343px;width:61px;height:16px;background:#d4d0c8;"></div>
<div style="left:226px;top:343px;width:20px;height:16px;overflow:hidden">
<div style="left:0px;top:2px;width:13px;height:13px;background:#ffffff;"></div>
<div style="left:0px;top:2px;width:12px;height:1px;background:#808080;"></div>
<div style="left:0px;top:2px;width:1px;height:12px;background:#808080;"></div>
<div style="left:1px;top:3px;width:10px;height:1px;background:#404040;"></div>
<div style="left:1px;top:3px;width:1px;height:10px;background:#404040;"></div>
<div style="left:0px;top:14px;width:13px;height:1px;background:#ffffff;"></div>
<div style="left:12px;top:2px;width:1px;height:13px;background:#ffffff;"></div>
<div style="left:1px;top:13px;width:11px;height:1px;background:#d4d0c8;"></div>
<div style="left:11px;top:3px;width:1px;height:11px;background:#d4d0c8;"></div>
<svg style="position:absolute;left:3px;top:5px" width="7" height="7" shape-rendering="crispEdges" fill="#000"><rect x="6" y="0" width="1" height="1"/><rect x="5" y="1" width="2" height="1"/><rect x="0" y="2" width="1" height="1"/><rect x="4" y="2" width="3" height="1"/><rect x="0" y="3" width="2" height="1"/><rect x="3" y="3" width="3" height="1"/><rect x="0" y="4" width="5" height="1"/><rect x="1" y="5" width="3" height="1"/><rect x="2" y="6" width="1" height="1"/></svg>
</div>
<div style="left:30px;top:359px;width:260px;height:1px;background:#000;"></div>
<div style="left:31px;top:362px;width:97px;height:15px;overflow:hidden"><div class="t" style="left:0;top:0;font-size:11px;color:#000;transform:scaleX(0.9050);transform-origin:0 0;">RESISTENCIA</div></div>
<div style="left:129px;top:362px;width:97px;height:15px;overflow:hidden"><div class="t" style="left:0;top:0;font-size:11px;color:#000;transform:scaleX(0.9838);transform-origin:0 0;">Centro Resistencia</div></div>
<div style="left:226px;top:360px;width:61px;height:16px;background:#d4d0c8;"></div>
<div style="left:226px;top:360px;width:20px;height:16px;overflow:hidden">
<div style="left:0px;top:2px;width:13px;height:13px;background:#ffffff;"></div>
<div style="left:0px;top:2px;width:12px;height:1px;background:#808080;"></div>
<div style="left:0px;top:2px;width:1px;height:12px;background:#808080;"></div>
<div style="left:1px;top:3px;width:10px;height:1px;background:#404040;"></div>
<div style="left:1px;top:3px;width:1px;height:10px;background:#404040;"></div>
<div style="left:0px;top:14px;width:13px;height:1px;background:#ffffff;"></div>
<div style="left:12px;top:2px;width:1px;height:13px;background:#ffffff;"></div>
<div style="left:1px;top:13px;width:11px;height:1px;background:#d4d0c8;"></div>
<div style="left:11px;top:3px;width:1px;height:11px;background:#d4d0c8;"></div>
<svg style="position:absolute;left:3px;top:5px" width="7" height="7" shape-rendering="crispEdges" fill="#000"><rect x="6" y="0" width="1" height="1"/><rect x="5" y="1" width="2" height="1"/><rect x="0" y="2" width="1" height="1"/><rect x="4" y="2" width="3" height="1"/><rect x="0" y="3" width="2" height="1"/><rect x="3" y="3" width="3" height="1"/><rect x="0" y="4" width="5" height="1"/><rect x="1" y="5" width="3" height="1"/><rect x="2" y="6" width="1" height="1"/></svg>
</div>
<div style="left:30px;top:376px;width:260px;height:1px;background:#000;"></div>
<div style="left:31px;top:379px;width:97px;height:15px;overflow:hidden"><div class="t" style="left:0;top:0;font-size:11px;color:#000;transform:scaleX(0.9050);transform-origin:0 0;">RESISTENCIA</div></div>
<div style="left:129px;top:379px;width:97px;height:15px;overflow:hidden"><div class="t" style="left:0;top:0;font-size:11px;color:#000;transform:scaleX(0.9771);transform-origin:0 0;">Pto.Tirol</div></div>
<div style="left:226px;top:377px;width:61px;height:16px;background:#d4d0c8;"></div>
<div style="left:226px;top:377px;width:20px;height:16px;overflow:hidden">
<div style="left:0px;top:2px;width:13px;height:13px;background:#ffffff;"></div>
<div style="left:0px;top:2px;width:12px;height:1px;background:#808080;"></div>
<div style="left:0px;top:2px;width:1px;height:12px;background:#808080;"></div>
<div style="left:1px;top:3px;width:10px;height:1px;background:#404040;"></div>
<div style="left:1px;top:3px;width:1px;height:10px;background:#404040;"></div>
<div style="left:0px;top:14px;width:13px;height:1px;background:#ffffff;"></div>
<div style="left:12px;top:2px;width:1px;height:13px;background:#ffffff;"></div>
<div style="left:1px;top:13px;width:11px;height:1px;background:#d4d0c8;"></div>
<div style="left:11px;top:3px;width:1px;height:11px;background:#d4d0c8;"></div>
<svg style="position:absolute;left:3px;top:5px" width="7" height="7" shape-rendering="crispEdges" fill="#000"><rect x="6" y="0" width="1" height="1"/><rect x="5" y="1" width="2" height="1"/><rect x="0" y="2" width="1" height="1"/><rect x="4" y="2" width="3" height="1"/><rect x="0" y="3" width="2" height="1"/><rect x="3" y="3" width="3" height="1"/><rect x="0" y="4" width="5" height="1"/><rect x="1" y="5" width="3" height="1"/><rect x="2" y="6" width="1" height="1"/></svg>
</div>
<div style="left:30px;top:393px;width:260px;height:1px;background:#000;"></div>
<div style="left:31px;top:396px;width:97px;height:15px;overflow:hidden"><div class="t" style="left:0;top:0;font-size:11px;color:#000;transform:scaleX(0.9351);transform-origin:0 0;">SANTA FE</div></div>
<div style="left:129px;top:396px;width:97px;height:15px;overflow:hidden"><div class="t" style="left:0;top:0;font-size:11px;color:#000;transform:scaleX(0.9741);transform-origin:0 0;">Centro Santa Fe</div></div>
<div style="left:226px;top:394px;width:61px;height:16px;background:#d4d0c8;"></div>
<div style="left:226px;top:394px;width:20px;height:16px;overflow:hidden">
<div style="left:0px;top:2px;width:13px;height:13px;background:#ffffff;"></div>
<div style="left:0px;top:2px;width:12px;height:1px;background:#808080;"></div>
<div style="left:0px;top:2px;width:1px;height:12px;background:#808080;"></div>
<div style="left:1px;top:3px;width:10px;height:1px;background:#404040;"></div>
<div style="left:1px;top:3px;width:1px;height:10px;background:#404040;"></div>
<div style="left:0px;top:14px;width:13px;height:1px;background:#ffffff;"></div>
<div style="left:12px;top:2px;width:1px;height:13px;background:#ffffff;"></div>
<div style="left:1px;top:13px;width:11px;height:1px;background:#d4d0c8;"></div>
<div style="left:11px;top:3px;width:1px;height:11px;background:#d4d0c8;"></div>
<svg style="position:absolute;left:3px;top:5px" width="7" height="7" shape-rendering="crispEdges" fill="#000"><rect x="6" y="0" width="1" height="1"/><rect x="5" y="1" width="2" height="1"/><rect x="0" y="2" width="1" height="1"/><rect x="4" y="2" width="3" height="1"/><rect x="0" y="3" width="2" height="1"/><rect x="3" y="3" width="3" height="1"/><rect x="0" y="4" width="5" height="1"/><rect x="1" y="5" width="3" height="1"/><rect x="2" y="6" width="1" height="1"/></svg>
</div>
<div style="left:30px;top:410px;width:260px;height:1px;background:#000;"></div>
<div style="left:31px;top:413px;width:97px;height:15px;overflow:hidden"><div class="t" style="left:0;top:0;font-size:11px;color:#000;transform:scaleX(0.9750);transform-origin:0 0;">_COLONIA AVELLA</div></div>
<div style="left:129px;top:413px;width:97px;height:15px;overflow:hidden"><div class="t" style="left:0;top:0;font-size:11px;color:#000;transform:scaleX(0.9050);transform-origin:0 0;">CENTRO</div></div>
<div style="left:226px;top:411px;width:61px;height:16px;background:#d4d0c8;"></div>
<div style="left:226px;top:411px;width:20px;height:16px;overflow:hidden">
<div style="left:0px;top:2px;width:13px;height:13px;background:#ffffff;"></div>
<div style="left:0px;top:2px;width:12px;height:1px;background:#808080;"></div>
<div style="left:0px;top:2px;width:1px;height:12px;background:#808080;"></div>
<div style="left:1px;top:3px;width:10px;height:1px;background:#404040;"></div>
<div style="left:1px;top:3px;width:1px;height:10px;background:#404040;"></div>
<div style="left:0px;top:14px;width:13px;height:1px;background:#ffffff;"></div>
<div style="left:12px;top:2px;width:1px;height:13px;background:#ffffff;"></div>
<div style="left:1px;top:13px;width:11px;height:1px;background:#d4d0c8;"></div>
<div style="left:11px;top:3px;width:1px;height:11px;background:#d4d0c8;"></div>
<svg style="position:absolute;left:3px;top:5px" width="7" height="7" shape-rendering="crispEdges" fill="#000"><rect x="6" y="0" width="1" height="1"/><rect x="5" y="1" width="2" height="1"/><rect x="0" y="2" width="1" height="1"/><rect x="4" y="2" width="3" height="1"/><rect x="0" y="3" width="2" height="1"/><rect x="3" y="3" width="3" height="1"/><rect x="0" y="4" width="5" height="1"/><rect x="1" y="5" width="3" height="1"/><rect x="2" y="6" width="1" height="1"/></svg>
</div>
<div style="left:30px;top:427px;width:260px;height:1px;background:#000;"></div>
<div style="left:31px;top:430px;width:97px;height:15px;overflow:hidden"><div class="t" style="left:0;top:0;font-size:11px;color:#000;transform:scaleX(0.9149);transform-origin:0 0;">_PRUEBAS</div></div>
<div style="left:129px;top:430px;width:97px;height:15px;overflow:hidden"><div class="t" style="left:0;top:0;font-size:11px;color:#000;transform:scaleX(0.9367);transform-origin:0 0;">KARLSRUHE 76185</div></div>
<div style="left:226px;top:428px;width:61px;height:16px;background:#d4d0c8;"></div>
<div style="left:226px;top:428px;width:20px;height:16px;overflow:hidden">
<div style="left:0px;top:2px;width:13px;height:13px;background:#ffffff;"></div>
<div style="left:0px;top:2px;width:12px;height:1px;background:#808080;"></div>
<div style="left:0px;top:2px;width:1px;height:12px;background:#808080;"></div>
<div style="left:1px;top:3px;width:10px;height:1px;background:#404040;"></div>
<div style="left:1px;top:3px;width:1px;height:10px;background:#404040;"></div>
<div style="left:0px;top:14px;width:13px;height:1px;background:#ffffff;"></div>
<div style="left:12px;top:2px;width:1px;height:13px;background:#ffffff;"></div>
<div style="left:1px;top:13px;width:11px;height:1px;background:#d4d0c8;"></div>
<div style="left:11px;top:3px;width:1px;height:11px;background:#d4d0c8;"></div>
<svg style="position:absolute;left:3px;top:5px" width="7" height="7" shape-rendering="crispEdges" fill="#000"><rect x="6" y="0" width="1" height="1"/><rect x="5" y="1" width="2" height="1"/><rect x="0" y="2" width="1" height="1"/><rect x="4" y="2" width="3" height="1"/><rect x="0" y="3" width="2" height="1"/><rect x="3" y="3" width="3" height="1"/><rect x="0" y="4" width="5" height="1"/><rect x="1" y="5" width="3" height="1"/><rect x="2" y="6" width="1" height="1"/></svg>
</div>
<div style="left:30px;top:444px;width:260px;height:1px;background:#000;"></div>
<div style="left:290px;top:258px;width:16px;height:16px;background:#d4d0c8;"></div>
<div style="left:290px;top:258px;width:15px;height:1px;background:#d4d0c8;"></div>
<div style="left:290px;top:258px;width:1px;height:15px;background:#d4d0c8;"></div>
<div style="left:291px;top:259px;width:13px;height:1px;background:#ffffff;"></div>
<div style="left:291px;top:259px;width:1px;height:13px;background:#ffffff;"></div>
<div style="left:290px;top:273px;width:16px;height:1px;background:#404040;"></div>
<div style="left:305px;top:258px;width:1px;height:16px;background:#404040;"></div>
<div style="left:291px;top:272px;width:14px;height:1px;background:#808080;"></div>
<div style="left:304px;top:259px;width:1px;height:14px;background:#808080;"></div>
<svg style="position:absolute;left:295px;top:265px" width="7" height="4" shape-rendering="crispEdges" fill="#ffffff"><rect x="3" y="0" width="1" height="1"/><rect x="2" y="1" width="3" height="1"/><rect x="1" y="2" width="5" height="1"/><rect x="0" y="3" width="7" height="1"/></svg>
<svg style="position:absolute;left:294px;top:264px" width="7" height="4" shape-rendering="crispEdges" fill="#808080"><rect x="3" y="0" width="1" height="1"/><rect x="2" y="1" width="3" height="1"/><rect x="1" y="2" width="5" height="1"/><rect x="0" y="3" width="7" height="1"/></svg>
<div style="left:290px;top:432px;width:16px;height:16px;background:#d4d0c8;"></div>
<div style="left:290px;top:432px;width:15px;height:1px;background:#d4d0c8;"></div>
<div style="left:290px;top:432px;width:1px;height:15px;background:#d4d0c8;"></div>
<div style="left:291px;top:433px;width:13px;height:1px;background:#ffffff;"></div>
<div style="left:291px;top:433px;width:1px;height:13px;background:#ffffff;"></div>
<div style="left:290px;top:447px;width:16px;height:1px;background:#404040;"></div>
<div style="left:305px;top:432px;width:1px;height:16px;background:#404040;"></div>
<div style="left:291px;top:446px;width:14px;height:1px;background:#808080;"></div>
<div style="left:304px;top:433px;width:1px;height:14px;background:#808080;"></div>
<svg style="position:absolute;left:295px;top:439px" width="7" height="4" shape-rendering="crispEdges" fill="#ffffff"><rect x="0" y="0" width="7" height="1"/><rect x="1" y="1" width="5" height="1"/><rect x="2" y="2" width="3" height="1"/><rect x="3" y="3" width="1" height="1"/></svg>
<svg style="position:absolute;left:294px;top:438px" width="7" height="4" shape-rendering="crispEdges" fill="#808080"><rect x="0" y="0" width="7" height="1"/><rect x="1" y="1" width="5" height="1"/><rect x="2" y="2" width="3" height="1"/><rect x="3" y="3" width="1" height="1"/></svg>
<div style="left:290px;top:274px;width:16px;height:158px;background-color:#d4d0c8;background-image:conic-gradient(#fff 25%,transparent 0 50%,#fff 0 75%,transparent 0);background-size:2px 2px;"></div>
<div style="left:312px;top:239px;width:264px;height:211px;border:1px solid #808080;box-sizing:border-box;"></div>
<div style="left:313px;top:240px;width:264px;height:211px;border:1px solid #ffffff;box-sizing:border-box;"></div>
<div style="left:312px;top:239px;width:264px;height:1px;background:#808080;"></div>
<div style="left:312px;top:239px;width:1px;height:211px;background:#808080;"></div>
<div style="left:317px;top:243px;width:13px;height:13px;background:#ffffff;"></div>
<div style="left:317px;top:243px;width:12px;height:1px;background:#808080;"></div>
<div style="left:317px;top:243px;width:1px;height:12px;background:#808080;"></div>
<div style="left:318px;top:244px;width:10px;height:1px;background:#404040;"></div>
<div style="left:318px;top:244px;width:1px;height:10px;background:#404040;"></div>
<div style="left:317px;top:255px;width:13px;height:1px;background:#ffffff;"></div>
<div style="left:329px;top:243px;width:1px;height:13px;background:#ffffff;"></div>
<div style="left:318px;top:254px;width:11px;height:1px;background:#d4d0c8;"></div>
<div style="left:328px;top:244px;width:1px;height:11px;background:#d4d0c8;"></div>
<svg style="position:absolute;left:320px;top:246px" width="7" height="7" shape-rendering="crispEdges" fill="#000"><rect x="6" y="0" width="1" height="1"/><rect x="5" y="1" width="2" height="1"/><rect x="0" y="2" width="1" height="1"/><rect x="4" y="2" width="3" height="1"/><rect x="0" y="3" width="2" height="1"/><rect x="3" y="3" width="3" height="1"/><rect x="0" y="4" width="5" height="1"/><rect x="1" y="5" width="3" height="1"/><rect x="2" y="6" width="1" height="1"/></svg>
<div class="t" style="left:334px;top:243px;font-size:12px;color:#000;letter-spacing:0.139px;">Proporcionales a categorías</div>
<div style="left:315px;top:257px;width:257px;height:192px;background:#000;"></div>
<div style="left:316px;top:274px;width:239px;height:174px;background:#ffffff;"></div>
<div style="left:316px;top:258px;width:239px;height:16px;background:#d4d0c8;"></div>
<div style="left:316px;top:258px;width:173px;height:16px;background:#000;"></div>
<div style="left:316px;top:258px;width:173px;height:1px;background:#ffffff;"></div>
<div style="left:316px;top:258px;width:1px;height:16px;background:#ffffff;"></div>
<div class="t" style="left:378px;top:260px;font-size:11px;color:#ffffff;">Categoría</div>
<div style="left:489px;top:258px;width:60px;height:16px;background:#000;"></div>
<div style="left:489px;top:258px;width:60px;height:1px;background:#ffffff;"></div>
<div style="left:489px;top:258px;width:1px;height:16px;background:#ffffff;"></div>
<div class="t" style="left:490px;top:260px;font-size:11px;color:#ffffff;">Seleccionar</div>
<div style="left:316px;top:274px;width:239px;height:1px;background:#000;"></div>
<div style="left:317px;top:277px;width:172px;height:15px;overflow:hidden"><div class="t" style="left:0;top:0;font-size:11px;color:#000;transform:scaleX(0.9108);transform-origin:0 0;">.NORMAL</div></div>
<div style="left:489px;top:275px;width:60px;height:16px;background:#d4d0c8;"></div>
<div style="left:489px;top:275px;width:20px;height:16px;overflow:hidden">
<div style="left:0px;top:2px;width:13px;height:13px;background:#ffffff;"></div>
<div style="left:0px;top:2px;width:12px;height:1px;background:#808080;"></div>
<div style="left:0px;top:2px;width:1px;height:12px;background:#808080;"></div>
<div style="left:1px;top:3px;width:10px;height:1px;background:#404040;"></div>
<div style="left:1px;top:3px;width:1px;height:10px;background:#404040;"></div>
<div style="left:0px;top:14px;width:13px;height:1px;background:#ffffff;"></div>
<div style="left:12px;top:2px;width:1px;height:13px;background:#ffffff;"></div>
<div style="left:1px;top:13px;width:11px;height:1px;background:#d4d0c8;"></div>
<div style="left:11px;top:3px;width:1px;height:11px;background:#d4d0c8;"></div>
<svg style="position:absolute;left:3px;top:5px" width="7" height="7" shape-rendering="crispEdges" fill="#000"><rect x="6" y="0" width="1" height="1"/><rect x="5" y="1" width="2" height="1"/><rect x="0" y="2" width="1" height="1"/><rect x="4" y="2" width="3" height="1"/><rect x="0" y="3" width="2" height="1"/><rect x="3" y="3" width="3" height="1"/><rect x="0" y="4" width="5" height="1"/><rect x="1" y="5" width="3" height="1"/><rect x="2" y="6" width="1" height="1"/></svg>
</div>
<div style="left:316px;top:291px;width:239px;height:18px;background:#000094;"></div>
<div style="left:549px;top:291px;width:6px;height:18px;background:#000094;"></div>
<div style="left:317px;top:294px;width:172px;height:15px;overflow:hidden"><div class="t" style="left:0;top:0;font-size:11px;color:#ffffff;transform:scaleX(0.9096);transform-origin:0 0;">.SIN PROPORCIONALES</div></div>
<div style="left:489px;top:291px;width:60px;height:18px;background:#d4d0c8;"></div>
<div style="left:489px;top:291px;width:60px;height:17px;border:1px solid #a8b0e0;box-sizing:border-box;"></div>
<div style="left:489px;top:308px;width:60px;height:1px;background:#000094;"></div>
<div style="left:489px;top:292px;width:20px;height:16px;overflow:hidden">
<div style="left:0px;top:2px;width:13px;height:13px;background:#ffffff;"></div>
<div style="left:0px;top:2px;width:12px;height:1px;background:#808080;"></div>
<div style="left:0px;top:2px;width:1px;height:12px;background:#808080;"></div>
<div style="left:1px;top:3px;width:10px;height:1px;background:#404040;"></div>
<div style="left:1px;top:3px;width:1px;height:10px;background:#404040;"></div>
<div style="left:0px;top:14px;width:13px;height:1px;background:#ffffff;"></div>
<div style="left:12px;top:2px;width:1px;height:13px;background:#ffffff;"></div>
<div style="left:1px;top:13px;width:11px;height:1px;background:#d4d0c8;"></div>
<div style="left:11px;top:3px;width:1px;height:11px;background:#d4d0c8;"></div>
</div>
<div style="left:317px;top:311px;width:172px;height:15px;overflow:hidden"><div class="t" style="left:0;top:0;font-size:11px;color:#000;transform:scaleX(0.9325);transform-origin:0 0;">BA-DONADO-808</div></div>
<div style="left:489px;top:309px;width:60px;height:16px;background:#d4d0c8;"></div>
<div style="left:489px;top:309px;width:20px;height:16px;overflow:hidden">
<div style="left:0px;top:2px;width:13px;height:13px;background:#ffffff;"></div>
<div style="left:0px;top:2px;width:12px;height:1px;background:#808080;"></div>
<div style="left:0px;top:2px;width:1px;height:12px;background:#808080;"></div>
<div style="left:1px;top:3px;width:10px;height:1px;background:#404040;"></div>
<div style="left:1px;top:3px;width:1px;height:10px;background:#404040;"></div>
<div style="left:0px;top:14px;width:13px;height:1px;background:#ffffff;"></div>
<div style="left:12px;top:2px;width:1px;height:13px;background:#ffffff;"></div>
<div style="left:1px;top:13px;width:11px;height:1px;background:#d4d0c8;"></div>
<div style="left:11px;top:3px;width:1px;height:11px;background:#d4d0c8;"></div>
<svg style="position:absolute;left:3px;top:5px" width="7" height="7" shape-rendering="crispEdges" fill="#000"><rect x="6" y="0" width="1" height="1"/><rect x="5" y="1" width="2" height="1"/><rect x="0" y="2" width="1" height="1"/><rect x="4" y="2" width="3" height="1"/><rect x="0" y="3" width="2" height="1"/><rect x="3" y="3" width="3" height="1"/><rect x="0" y="4" width="5" height="1"/><rect x="1" y="5" width="3" height="1"/><rect x="2" y="6" width="1" height="1"/></svg>
</div>
<div style="left:316px;top:325px;width:239px;height:1px;background:#000;"></div>
<div style="left:317px;top:328px;width:172px;height:15px;overflow:hidden"><div class="t" style="left:0;top:0;font-size:11px;color:#000;transform:scaleX(0.9115);transform-origin:0 0;">CANJE DE SERVICIOS</div></div>
<div style="left:489px;top:326px;width:60px;height:16px;background:#d4d0c8;"></div>
<div style="left:489px;top:326px;width:20px;height:16px;overflow:hidden">
<div style="left:0px;top:2px;width:13px;height:13px;background:#ffffff;"></div>
<div style="left:0px;top:2px;width:12px;height:1px;background:#808080;"></div>
<div style="left:0px;top:2px;width:1px;height:12px;background:#808080;"></div>
<div style="left:1px;top:3px;width:10px;height:1px;background:#404040;"></div>
<div style="left:1px;top:3px;width:1px;height:10px;background:#404040;"></div>
<div style="left:0px;top:14px;width:13px;height:1px;background:#ffffff;"></div>
<div style="left:12px;top:2px;width:1px;height:13px;background:#ffffff;"></div>
<div style="left:1px;top:13px;width:11px;height:1px;background:#d4d0c8;"></div>
<div style="left:11px;top:3px;width:1px;height:11px;background:#d4d0c8;"></div>
<svg style="position:absolute;left:3px;top:5px" width="7" height="7" shape-rendering="crispEdges" fill="#000"><rect x="6" y="0" width="1" height="1"/><rect x="5" y="1" width="2" height="1"/><rect x="0" y="2" width="1" height="1"/><rect x="4" y="2" width="3" height="1"/><rect x="0" y="3" width="2" height="1"/><rect x="3" y="3" width="3" height="1"/><rect x="0" y="4" width="5" height="1"/><rect x="1" y="5" width="3" height="1"/><rect x="2" y="6" width="1" height="1"/></svg>
</div>
<div style="left:316px;top:342px;width:239px;height:1px;background:#000;"></div>
<div style="left:317px;top:345px;width:172px;height:15px;overflow:hidden"><div class="t" style="left:0;top:0;font-size:11px;color:#000;transform:scaleX(0.9109);transform-origin:0 0;">CANJE IF</div></div>
<div style="left:489px;top:343px;width:60px;height:16px;background:#d4d0c8;"></div>
<div style="left:489px;top:343px;width:20px;height:16px;overflow:hidden">
<div style="left:0px;top:2px;width:13px;height:13px;background:#ffffff;"></div>
<div style="left:0px;top:2px;width:12px;height:1px;background:#808080;"></div>
<div style="left:0px;top:2px;width:1px;height:12px;background:#808080;"></div>
<div style="left:1px;top:3px;width:10px;height:1px;background:#404040;"></div>
<div style="left:1px;top:3px;width:1px;height:10px;background:#404040;"></div>
<div style="left:0px;top:14px;width:13px;height:1px;background:#ffffff;"></div>
<div style="left:12px;top:2px;width:1px;height:13px;background:#ffffff;"></div>
<div style="left:1px;top:13px;width:11px;height:1px;background:#d4d0c8;"></div>
<div style="left:11px;top:3px;width:1px;height:11px;background:#d4d0c8;"></div>
<svg style="position:absolute;left:3px;top:5px" width="7" height="7" shape-rendering="crispEdges" fill="#000"><rect x="6" y="0" width="1" height="1"/><rect x="5" y="1" width="2" height="1"/><rect x="0" y="2" width="1" height="1"/><rect x="4" y="2" width="3" height="1"/><rect x="0" y="3" width="2" height="1"/><rect x="3" y="3" width="3" height="1"/><rect x="0" y="4" width="5" height="1"/><rect x="1" y="5" width="3" height="1"/><rect x="2" y="6" width="1" height="1"/></svg>
</div>
<div style="left:316px;top:359px;width:239px;height:1px;background:#000;"></div>
<div style="left:317px;top:362px;width:172px;height:15px;overflow:hidden"><div class="t" style="left:0;top:0;font-size:11px;color:#000;transform:scaleX(0.9050);transform-origin:0 0;">CLANDESTINOS</div></div>
<div style="left:489px;top:360px;width:60px;height:16px;background:#d4d0c8;"></div>
<div style="left:489px;top:360px;width:20px;height:16px;overflow:hidden">
<div style="left:0px;top:2px;width:13px;height:13px;background:#ffffff;"></div>
<div style="left:0px;top:2px;width:12px;height:1px;background:#808080;"></div>
<div style="left:0px;top:2px;width:1px;height:12px;background:#808080;"></div>
<div style="left:1px;top:3px;width:10px;height:1px;background:#404040;"></div>
<div style="left:1px;top:3px;width:1px;height:10px;background:#404040;"></div>
<div style="left:0px;top:14px;width:13px;height:1px;background:#ffffff;"></div>
<div style="left:12px;top:2px;width:1px;height:13px;background:#ffffff;"></div>
<div style="left:1px;top:13px;width:11px;height:1px;background:#d4d0c8;"></div>
<div style="left:11px;top:3px;width:1px;height:11px;background:#d4d0c8;"></div>
<svg style="position:absolute;left:3px;top:5px" width="7" height="7" shape-rendering="crispEdges" fill="#000"><rect x="6" y="0" width="1" height="1"/><rect x="5" y="1" width="2" height="1"/><rect x="0" y="2" width="1" height="1"/><rect x="4" y="2" width="3" height="1"/><rect x="0" y="3" width="2" height="1"/><rect x="3" y="3" width="3" height="1"/><rect x="0" y="4" width="5" height="1"/><rect x="1" y="5" width="3" height="1"/><rect x="2" y="6" width="1" height="1"/></svg>
</div>
<div style="left:316px;top:376px;width:239px;height:1px;background:#000;"></div>
<div style="left:317px;top:379px;width:172px;height:15px;overflow:hidden"><div class="t" style="left:0;top:0;font-size:11px;color:#000;transform:scaleX(0.9456);transform-origin:0 0;">CONSORCIO 40% sólo G2/TV+V1</div></div>
<div style="left:489px;top:377px;width:60px;height:16px;background:#d4d0c8;"></div>
<div style="left:489px;top:377px;width:20px;height:16px;overflow:hidden">
<div style="left:0px;top:2px;width:13px;height:13px;background:#ffffff;"></div>
<div style="left:0px;top:2px;width:12px;height:1px;background:#808080;"></div>
<div style="left:0px;top:2px;width:1px;height:12px;background:#808080;"></div>
<div style="left:1px;top:3px;width:10px;height:1px;background:#404040;"></div>
<div style="left:1px;top:3px;width:1px;height:10px;background:#404040;"></div>
<div style="left:0px;top:14px;width:13px;height:1px;background:#ffffff;"></div>
<div style="left:12px;top:2px;width:1px;height:13px;background:#ffffff;"></div>
<div style="left:1px;top:13px;width:11px;height:1px;background:#d4d0c8;"></div>
<div style="left:11px;top:3px;width:1px;height:11px;background:#d4d0c8;"></div>
<svg style="position:absolute;left:3px;top:5px" width="7" height="7" shape-rendering="crispEdges" fill="#000"><rect x="6" y="0" width="1" height="1"/><rect x="5" y="1" width="2" height="1"/><rect x="0" y="2" width="1" height="1"/><rect x="4" y="2" width="3" height="1"/><rect x="0" y="3" width="2" height="1"/><rect x="3" y="3" width="3" height="1"/><rect x="0" y="4" width="5" height="1"/><rect x="1" y="5" width="3" height="1"/><rect x="2" y="6" width="1" height="1"/></svg>
</div>
<div style="left:316px;top:393px;width:239px;height:1px;background:#000;"></div>
<div style="left:317px;top:396px;width:172px;height:15px;overflow:hidden"><div class="t" style="left:0;top:0;font-size:11px;color:#000;transform:scaleX(0.9223);transform-origin:0 0;">CONSORCIO DESCUENTO 10%</div></div>
<div style="left:489px;top:394px;width:60px;height:16px;background:#d4d0c8;"></div>
<div style="left:489px;top:394px;width:20px;height:16px;overflow:hidden">
<div style="left:0px;top:2px;width:13px;height:13px;background:#ffffff;"></div>
<div style="left:0px;top:2px;width:12px;height:1px;background:#808080;"></div>
<div style="left:0px;top:2px;width:1px;height:12px;background:#808080;"></div>
<div style="left:1px;top:3px;width:10px;height:1px;background:#404040;"></div>
<div style="left:1px;top:3px;width:1px;height:10px;background:#404040;"></div>
<div style="left:0px;top:14px;width:13px;height:1px;background:#ffffff;"></div>
<div style="left:12px;top:2px;width:1px;height:13px;background:#ffffff;"></div>
<div style="left:1px;top:13px;width:11px;height:1px;background:#d4d0c8;"></div>
<div style="left:11px;top:3px;width:1px;height:11px;background:#d4d0c8;"></div>
<svg style="position:absolute;left:3px;top:5px" width="7" height="7" shape-rendering="crispEdges" fill="#000"><rect x="6" y="0" width="1" height="1"/><rect x="5" y="1" width="2" height="1"/><rect x="0" y="2" width="1" height="1"/><rect x="4" y="2" width="3" height="1"/><rect x="0" y="3" width="2" height="1"/><rect x="3" y="3" width="3" height="1"/><rect x="0" y="4" width="5" height="1"/><rect x="1" y="5" width="3" height="1"/><rect x="2" y="6" width="1" height="1"/></svg>
</div>
<div style="left:316px;top:410px;width:239px;height:1px;background:#000;"></div>
<div style="left:317px;top:413px;width:172px;height:15px;overflow:hidden"><div class="t" style="left:0;top:0;font-size:11px;color:#000;transform:scaleX(0.9238);transform-origin:0 0;">CONSORCIO DESCUENTO 15 %</div></div>
<div style="left:489px;top:411px;width:60px;height:16px;background:#d4d0c8;"></div>
<div style="left:489px;top:411px;width:20px;height:16px;overflow:hidden">
<div style="left:0px;top:2px;width:13px;height:13px;background:#ffffff;"></div>
<div style="left:0px;top:2px;width:12px;height:1px;background:#808080;"></div>
<div style="left:0px;top:2px;width:1px;height:12px;background:#808080;"></div>
<div style="left:1px;top:3px;width:10px;height:1px;background:#404040;"></div>
<div style="left:1px;top:3px;width:1px;height:10px;background:#404040;"></div>
<div style="left:0px;top:14px;width:13px;height:1px;background:#ffffff;"></div>
<div style="left:12px;top:2px;width:1px;height:13px;background:#ffffff;"></div>
<div style="left:1px;top:13px;width:11px;height:1px;background:#d4d0c8;"></div>
<div style="left:11px;top:3px;width:1px;height:11px;background:#d4d0c8;"></div>
<svg style="position:absolute;left:3px;top:5px" width="7" height="7" shape-rendering="crispEdges" fill="#000"><rect x="6" y="0" width="1" height="1"/><rect x="5" y="1" width="2" height="1"/><rect x="0" y="2" width="1" height="1"/><rect x="4" y="2" width="3" height="1"/><rect x="0" y="3" width="2" height="1"/><rect x="3" y="3" width="3" height="1"/><rect x="0" y="4" width="5" height="1"/><rect x="1" y="5" width="3" height="1"/><rect x="2" y="6" width="1" height="1"/></svg>
</div>
<div style="left:316px;top:427px;width:239px;height:1px;background:#000;"></div>
<div style="left:317px;top:430px;width:172px;height:15px;overflow:hidden"><div class="t" style="left:0;top:0;font-size:11px;color:#000;transform:scaleX(0.9237);transform-origin:0 0;">CORPORATIVA</div></div>
<div style="left:489px;top:428px;width:60px;height:16px;background:#d4d0c8;"></div>
<div style="left:489px;top:428px;width:20px;height:16px;overflow:hidden">
<div style="left:0px;top:2px;width:13px;height:13px;background:#ffffff;"></div>
<div style="left:0px;top:2px;width:12px;height:1px;background:#808080;"></div>
<div style="left:0px;top:2px;width:1px;height:12px;background:#808080;"></div>
<div style="left:1px;top:3px;width:10px;height:1px;background:#404040;"></div>
<div style="left:1px;top:3px;width:1px;height:10px;background:#404040;"></div>
<div style="left:0px;top:14px;width:13px;height:1px;background:#ffffff;"></div>
<div style="left:12px;top:2px;width:1px;height:13px;background:#ffffff;"></div>
<div style="left:1px;top:13px;width:11px;height:1px;background:#d4d0c8;"></div>
<div style="left:11px;top:3px;width:1px;height:11px;background:#d4d0c8;"></div>
<svg style="position:absolute;left:3px;top:5px" width="7" height="7" shape-rendering="crispEdges" fill="#000"><rect x="6" y="0" width="1" height="1"/><rect x="5" y="1" width="2" height="1"/><rect x="0" y="2" width="1" height="1"/><rect x="4" y="2" width="3" height="1"/><rect x="0" y="3" width="2" height="1"/><rect x="3" y="3" width="3" height="1"/><rect x="0" y="4" width="5" height="1"/><rect x="1" y="5" width="3" height="1"/><rect x="2" y="6" width="1" height="1"/></svg>
</div>
<div style="left:316px;top:444px;width:239px;height:1px;background:#000;"></div>
<div style="left:489px;top:445px;width:60px;height:3px;background:#d4d0c8;"></div>
<div style="left:489px;top:445px;width:20px;height:3px;overflow:hidden">
<div style="left:0px;top:2px;width:13px;height:13px;background:#ffffff;"></div>
<div style="left:0px;top:2px;width:12px;height:1px;background:#808080;"></div>
<div style="left:0px;top:2px;width:1px;height:12px;background:#808080;"></div>
<div style="left:1px;top:3px;width:10px;height:1px;background:#404040;"></div>
<div style="left:1px;top:3px;width:1px;height:10px;background:#404040;"></div>
<div style="left:0px;top:14px;width:13px;height:1px;background:#ffffff;"></div>
<div style="left:12px;top:2px;width:1px;height:13px;background:#ffffff;"></div>
<div style="left:1px;top:13px;width:11px;height:1px;background:#d4d0c8;"></div>
<div style="left:11px;top:3px;width:1px;height:11px;background:#d4d0c8;"></div>
<svg style="position:absolute;left:3px;top:5px" width="7" height="7" shape-rendering="crispEdges" fill="#000"><rect x="6" y="0" width="1" height="1"/><rect x="5" y="1" width="2" height="1"/><rect x="0" y="2" width="1" height="1"/><rect x="4" y="2" width="3" height="1"/><rect x="0" y="3" width="2" height="1"/><rect x="3" y="3" width="3" height="1"/><rect x="0" y="4" width="5" height="1"/><rect x="1" y="5" width="3" height="1"/><rect x="2" y="6" width="1" height="1"/></svg>
</div>
<div style="left:555px;top:258px;width:16px;height:16px;background:#d4d0c8;"></div>
<div style="left:555px;top:258px;width:15px;height:1px;background:#d4d0c8;"></div>
<div style="left:555px;top:258px;width:1px;height:15px;background:#d4d0c8;"></div>
<div style="left:556px;top:259px;width:13px;height:1px;background:#ffffff;"></div>
<div style="left:556px;top:259px;width:1px;height:13px;background:#ffffff;"></div>
<div style="left:555px;top:273px;width:16px;height:1px;background:#404040;"></div>
<div style="left:570px;top:258px;width:1px;height:16px;background:#404040;"></div>
<div style="left:556px;top:272px;width:14px;height:1px;background:#808080;"></div>
<div style="left:569px;top:259px;width:1px;height:14px;background:#808080;"></div>
<svg style="position:absolute;left:559px;top:264px" width="7" height="4" shape-rendering="crispEdges" fill="#000"><rect x="3" y="0" width="1" height="1"/><rect x="2" y="1" width="3" height="1"/><rect x="1" y="2" width="5" height="1"/><rect x="0" y="3" width="7" height="1"/></svg>
<div style="left:555px;top:432px;width:16px;height:16px;background:#d4d0c8;"></div>
<div style="left:555px;top:432px;width:15px;height:1px;background:#d4d0c8;"></div>
<div style="left:555px;top:432px;width:1px;height:15px;background:#d4d0c8;"></div>
<div style="left:556px;top:433px;width:13px;height:1px;background:#ffffff;"></div>
<div style="left:556px;top:433px;width:1px;height:13px;background:#ffffff;"></div>
<div style="left:555px;top:447px;width:16px;height:1px;background:#404040;"></div>
<div style="left:570px;top:432px;width:1px;height:16px;background:#404040;"></div>
<div style="left:556px;top:446px;width:14px;height:1px;background:#808080;"></div>
<div style="left:569px;top:433px;width:1px;height:14px;background:#808080;"></div>
<svg style="position:absolute;left:559px;top:438px" width="7" height="4" shape-rendering="crispEdges" fill="#000"><rect x="0" y="0" width="7" height="1"/><rect x="1" y="1" width="5" height="1"/><rect x="2" y="2" width="3" height="1"/><rect x="3" y="3" width="1" height="1"/></svg>
<div style="left:555px;top:274px;width:16px;height:158px;background-color:#d4d0c8;background-image:conic-gradient(#fff 25%,transparent 0 50%,#fff 0 75%,transparent 0);background-size:2px 2px;"></div>
<div style="left:555px;top:274px;width:16px;height:81px;background:#d4d0c8;"></div>
<div style="left:555px;top:274px;width:15px;height:1px;background:#d4d0c8;"></div>
<div style="left:555px;top:274px;width:1px;height:80px;background:#d4d0c8;"></div>
<div style="left:556px;top:275px;width:13px;height:1px;background:#ffffff;"></div>
<div style="left:556px;top:275px;width:1px;height:78px;background:#ffffff;"></div>
<div style="left:555px;top:354px;width:16px;height:1px;background:#404040;"></div>
<div style="left:570px;top:274px;width:1px;height:81px;background:#404040;"></div>
<div style="left:556px;top:353px;width:14px;height:1px;background:#808080;"></div>
<div style="left:569px;top:275px;width:1px;height:79px;background:#808080;"></div>
<div style="left:578px;top:275px;width:199px;height:175px;border:1px solid #808080;box-sizing:border-box;"></div>
<div style="left:579px;top:276px;width:199px;height:175px;border:1px solid #ffffff;box-sizing:border-box;"></div>
<div style="left:578px;top:275px;width:199px;height:1px;background:#808080;"></div>
<div style="left:578px;top:275px;width:1px;height:175px;background:#808080;"></div>
<div class="t" style="left:586px;top:286px;font-size:11px;color:#000;font-weight:bold;letter-spacing:0.024px;">Conciliación de la</div>
<div class="t" style="left:586px;top:300px;font-size:11px;color:#000;font-weight:bold;letter-spacing:0.317px;">Cuenta Corriente</div>
<div class="t" style="left:695px;top:286px;font-size:11px;color:#000;transform:scaleX(0.9217);transform-origin:0 0;">Inicio:</div>
<div class="t" style="left:695px;top:310px;font-size:11px;color:#000;transform:scaleX(0.9292);transform-origin:0 0;">Final:</div>
<div class="t" style="left:585px;top:388px;font-size:11px;color:#000;font-weight:bold;letter-spacing:0.134px;">Facturación:</div>
<div class="t" style="left:695px;top:380px;font-size:11px;color:#000;transform:scaleX(0.9217);transform-origin:0 0;">Inicio:</div>
<div class="t" style="left:695px;top:401px;font-size:11px;color:#000;transform:scaleX(0.9292);transform-origin:0 0;">Final:</div>
<svg style="position:absolute;left:338px;top:459px" width="110" height="9" shape-rendering="crispEdges" fill="#3c0c8c"><polygon points="0,0 30,0 30,3 16,3 16,8"/><polygon points="78,0 108,0 92,8 92,3 78,3"/></svg>
<div style="left:0px;top:471px;width:793px;height:1px;background:#ffffff;"></div>
<div style="left:0px;top:472px;width:793px;height:23px;background:#d4d0c8;"></div>
<div style="left:632px;top:472px;width:1px;height:21px;background:#000;"></div>
<div style="left:635px;top:473px;width:27px;height:20px;background:#d4d0c8;"></div>
<div style="left:635px;top:473px;width:27px;height:1px;background:#808080;"></div>
<div style="left:635px;top:473px;width:1px;height:20px;background:#808080;"></div>
<div style="left:635px;top:492px;width:27px;height:1px;background:#ffffff;"></div>
<div style="left:661px;top:473px;width:1px;height:20px;background:#ffffff;"></div>
<div style="left:664px;top:473px;width:30px;height:20px;background:#d4d0c8;"></div>
<div style="left:664px;top:473px;width:30px;height:1px;background:#808080;"></div>
<div style="left:664px;top:473px;width:1px;height:20px;background:#808080;"></div>
<div style="left:664px;top:492px;width:30px;height:1px;background:#ffffff;"></div>
<div style="left:693px;top:473px;width:1px;height:20px;background:#ffffff;"></div>
<div style="left:695px;top:473px;width:29px;height:20px;background:#d4d0c8;"></div>
<div style="left:695px;top:473px;width:29px;height:1px;background:#808080;"></div>
<div style="left:695px;top:473px;width:1px;height:20px;background:#808080;"></div>
<div style="left:695px;top:492px;width:29px;height:1px;background:#ffffff;"></div>
<div style="left:723px;top:473px;width:1px;height:20px;background:#ffffff;"></div>
<div style="left:726px;top:473px;width:64px;height:20px;background:#d4d0c8;"></div>
<div style="left:726px;top:473px;width:64px;height:1px;background:#808080;"></div>
<div style="left:726px;top:473px;width:1px;height:20px;background:#808080;"></div>
<div style="left:726px;top:492px;width:64px;height:1px;background:#ffffff;"></div>
<div style="left:789px;top:473px;width:1px;height:20px;background:#ffffff;"></div>
<div class="t" style="left:666px;top:477px;font-size:11px;color:#000;letter-spacing:-0.016px;">NUM</div>
<div class="t" style="left:727px;top:477px;font-size:11px;color:#000;letter-spacing:-0.022px;">12:02:32 am</div>
<div style="left:0px;top:495px;width:793px;height:1px;background:#ffffff;"></div>
<div style="left:0px;top:496px;width:793px;height:9px;background:#d4d0c8;"></div>
<div style="left:0px;top:499px;width:45px;height:1px;background:#ffffff;"></div>
<div style="left:45px;top:499px;width:1px;height:6px;background:#404040;"></div>
<div style="left:0px;top:502px;width:5px;height:3px;background:#e06020;"></div>
<div style="left:5px;top:503px;width:7px;height:2px;background:#50b040;"></div>
<div style="left:54px;top:499px;width:1px;height:6px;background:#808080;"></div>
<div style="left:55px;top:499px;width:1px;height:6px;background:#ffffff;"></div>
<div style="left:67px;top:502px;width:8px;height:3px;background:#4090d0;"></div>
<div style="left:73px;top:501px;width:5px;height:2px;background:#e0c060;"></div>
<div style="left:97px;top:499px;width:1px;height:6px;background:#808080;"></div>
<div style="left:98px;top:499px;width:1px;height:6px;background:#ffffff;"></div>
<div style="left:102px;top:499px;width:146px;height:1px;background:#ffffff;"></div>
<div style="left:102px;top:499px;width:1px;height:6px;background:#ffffff;"></div>
<div style="left:247px;top:499px;width:1px;height:6px;background:#404040;"></div>
<div style="left:252px;top:499px;width:149px;height:1px;background:#ffffff;"></div>
<div style="left:252px;top:499px;width:1px;height:6px;background:#ffffff;"></div>
<div style="left:400px;top:499px;width:1px;height:6px;background:#404040;"></div>
<div style="left:107px;top:502px;width:12px;height:3px;background:#f0e0a0;"></div>
<div style="left:406px;top:499px;width:150px;height:1px;background:#404040;"></div>
<div style="left:406px;top:499px;width:1px;height:6px;background:#404040;"></div>
<div style="left:408px;top:500px;width:146px;height:5px;background-color:#d4d0c8;background-image:conic-gradient(#fff 25%,transparent 0 50%,#fff 0 75%,transparent 0);background-size:2px 2px;"></div>
<div style="left:412px;top:501px;width:10px;height:4px;background:#c02020;"></div>
<div style="left:257px;top:501px;width:3px;height:4px;background:#2040c0;"></div>
<div style="left:262px;top:501px;width:3px;height:4px;background:#2040c0;"></div>
<div style="left:565px;top:499px;width:1px;height:6px;background:#808080;"></div>
<div style="left:574px;top:500px;width:18px;height:5px;background:#0a246a;"></div>
<div style="left:596px;top:499px;width:1px;height:6px;background:#808080;"></div>
<div style="left:605px;top:501px;width:6px;height:4px;background:#909090;"></div>
<div style="left:623px;top:499px;width:1px;height:6px;background:#808080;"></div>
<div style="left:749px;top:499px;width:44px;height:1px;background:#808080;"></div>
<div style="left:749px;top:499px;width:1px;height:6px;background:#808080;"></div>
<div style="left:752px;top:501px;width:16px;height:4px;background:#e07830;"></div>
<div style="left:754px;top:502px;width:12px;height:3px;background:#f8b070;"></div>
<div style="left:777px;top:501px;width:8px;height:4px;background:#80b0e0;"></div>
</body></html>
